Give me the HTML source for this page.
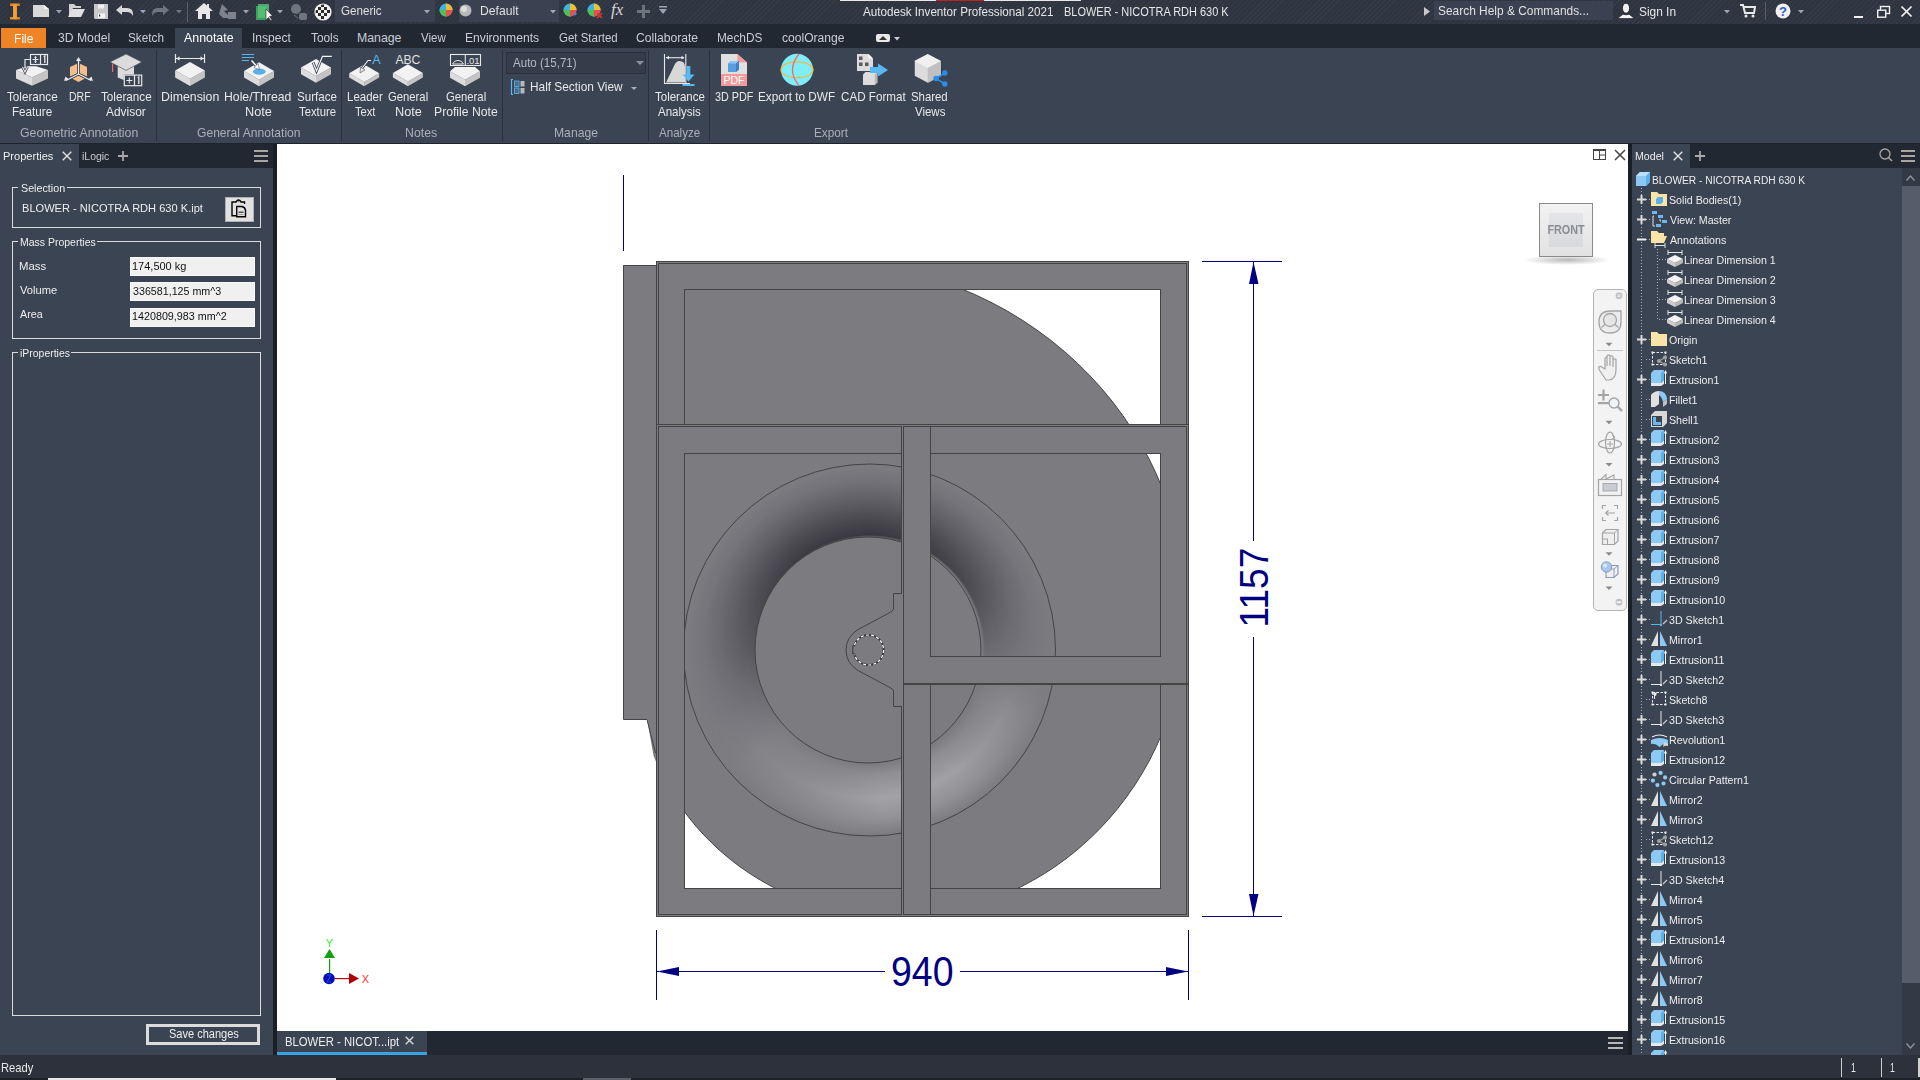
<!DOCTYPE html>
<html><head><meta charset="utf-8">
<style>
html,body{margin:0;padding:0;}
body{width:1920px;height:1080px;overflow:hidden;position:relative;background:#3b4453;font-family:"Liberation Sans", sans-serif;}
.t{position:absolute;white-space:nowrap;line-height:1;}
.r{position:absolute;}
.s{position:absolute;overflow:visible;}
</style></head><body>
<div class="r" style="left:0px;top:0px;width:1920px;height:24px;background:#2f3540;background-image:repeating-linear-gradient(135deg, rgba(255,255,255,0.035) 0 1px, rgba(0,0,0,0) 1px 3.6px);"></div><svg class="s" style="left:8px;top:2px;" width="14" height="20" viewBox="0 0 14 20"><defs><linearGradient id="lg1" x1="0" x2="1"><stop offset="0" stop-color="#e07a1a"/><stop offset="0.5" stop-color="#f4a640"/><stop offset="1" stop-color="#d06a10"/></linearGradient></defs><path d="M2,1.5 H12 V4 H9 V15 H12 V17.5 H2 V15 H5 V4 H2 Z" fill="url(#lg1)"/></svg><svg class="s" style="left:33px;top:4px;" width="17" height="14" viewBox="0 0 17 14"><path d="M0,1 H11 L16,5 V13 H0 Z" fill="#d9d9d9"/><path d="M11,1 V5 H16" fill="#f2f2f2"/></svg><svg class="s" style="left:56px;top:10px;" width="6" height="4" viewBox="0 0 6 4"><path d="M0,0 H6 L3,3.5 Z" fill="#9aa3b5"/></svg><svg class="s" style="left:68px;top:4px;" width="18" height="14" viewBox="0 0 18 14"><path d="M1,0 H6 L8,2 H13 V4 H5 L1,13 Z" fill="#d0d0d0"/><path d="M4,5 H17 L13,13 H0 Z" fill="#e0e0e0"/></svg><svg class="s" style="left:94px;top:4px;" width="14" height="15" viewBox="0 0 14 15"><path d="M0,0 H14 V15 H1 L0,14 Z" fill="#c8c8c8"/><rect x="4" y="0.5" width="6" height="4" fill="#f0f0f0"/><rect x="4" y="9.5" width="7" height="4.5" fill="#f5f5f5"/><rect x="5" y="10.5" width="1.2" height="2" fill="#333"/></svg><svg class="s" style="left:116px;top:5px;" width="18" height="12" viewBox="0 0 18 12"><path d="M0,5 L6,0 V3 H11 Q17,3 17,9 V11 Q15,7 11,7 H6 V10 Z" fill="#d8d8d8"/></svg><svg class="s" style="left:140px;top:10px;" width="6" height="4" viewBox="0 0 6 4"><path d="M0,0 H6 L3,3.5 Z" fill="#9aa3b5"/></svg><svg class="s" style="left:152px;top:5px;" width="18" height="12" viewBox="0 0 18 12"><path d="M17,5 L11,0 V3 H6 Q0,3 0,9 V11 Q2,7 6,7 H11 V10 Z" fill="#6f7580"/></svg><svg class="s" style="left:176px;top:10px;" width="6" height="4" viewBox="0 0 6 4"><path d="M0,0 H6 L3,3.5 Z" fill="#6f7580"/></svg><div class="r" style="left:187px;top:2px;width:1px;height:20px;background:#5a606b;"></div><svg class="s" style="left:195px;top:3px;" width="18" height="17" viewBox="0 0 18 17"><path d="M9,0 L18,8 H15 V16 H11 V11 H7 V16 H3 V8 H0 Z" fill="#e8e8e8"/><rect x="12" y="1" width="2" height="4" fill="#e8e8e8"/></svg><svg class="s" style="left:219px;top:4px;" width="18" height="15" viewBox="0 0 18 15"><path d="M3,0 L9,6 L5,7 L12,14 H4 L0,10 Z" fill="#7d838c"/><rect x="9" y="8" width="8" height="7" fill="#7d838c"/></svg><svg class="s" style="left:243px;top:10px;" width="6" height="4" viewBox="0 0 6 4"><path d="M0,0 H6 L3,3.5 Z" fill="#9aa3b5"/></svg><svg class="s" style="left:255px;top:3px;" width="18" height="18" viewBox="0 0 18 18"><rect x="1" y="3" width="11" height="14" fill="#3aa35a"/><rect x="3" y="1" width="11" height="14" fill="#5cc27a" opacity="0.8"/><path d="M11,6 L11,17 L13.5,14.5 L16,18 L17,17 L14.5,13.5 L17.5,13 Z" fill="#ffffff"/><path d="M11,6 L11,17 L13.5,14.5 L16,18 L17,17 L14.5,13.5 L17.5,13 Z" fill="none" stroke="#222" stroke-width="0.6"/></svg><svg class="s" style="left:277px;top:10px;" width="6" height="4" viewBox="0 0 6 4"><path d="M0,0 H6 L3,3.5 Z" fill="#9aa3b5"/></svg><svg class="s" style="left:290px;top:3px;" width="18" height="18" viewBox="0 0 18 18"><ellipse cx="6" cy="6" rx="5" ry="5" fill="#6f757e"/><rect x="9" y="10" width="8" height="7" rx="2" fill="#6f757e"/><path d="M4,12 L8,15" stroke="#6f757e"/></svg><svg class="s" style="left:314px;top:3px;" width="18" height="18" viewBox="0 0 18 18"><circle cx="9" cy="9" r="8" fill="#f0f0f0"/><g fill="#2a2a2a"><rect x="4" y="4" width="3" height="3"/><rect x="10" y="4" width="3" height="3"/><rect x="7" y="7" width="3" height="3"/><rect x="4" y="10" width="3" height="3"/><rect x="10" y="10" width="3" height="3"/><rect x="7" y="1" width="3" height="3"/><rect x="7" y="13" width="3" height="3"/><rect x="1" y="7" width="3" height="3"/><rect x="13" y="7" width="3" height="3"/></g><circle cx="9" cy="9" r="8" fill="none" stroke="#f0f0f0" stroke-width="1.2"/></svg><div class="r" style="left:335px;top:0px;width:100px;height:22px;background:#3a4150;"></div><div class="t" style="left:341.42px;top:5.22px;font-size:12.5px;color:#e0e0e0;transform:scaleX(0.9285);transform-origin:0 0;">Generic</div><svg class="s" style="left:424px;top:10px;" width="6" height="4" viewBox="0 0 6 4"><path d="M0,0 H6 L3,3.5 Z" fill="#a0a7b3"/></svg><svg class="s" style="left:439px;top:3px;" width="14" height="14" viewBox="0 0 14 14"><circle cx="7" cy="7" r="6.5" fill="#3cb4e6"/><path d="M7,7 L7,0.5 A6.5,6.5 0 0 1 13.5,7 Z" fill="#f0c030"/><path d="M7,7 L13.5,7 A6.5,6.5 0 0 1 7,13.5 Z" fill="#e85050"/><path d="M7,7 L7,13.5 A6.5,6.5 0 0 1 0.5,7 Z" fill="#50c050"/></svg><div class="r" style="left:459px;top:0px;width:100px;height:22px;background:#3a4150;"></div><svg class="s" style="left:459px;top:4px;" width="13" height="13" viewBox="0 0 13 13"><circle cx="6.5" cy="6.5" r="6" fill="#b8b8b8"/><circle cx="5" cy="5" r="3" fill="#dcdcdc"/></svg><div class="t" style="left:479.53px;top:5.22px;font-size:12.5px;color:#e0e0e0;transform:scaleX(0.9724);transform-origin:0 0;">Default</div><svg class="s" style="left:550px;top:10px;" width="6" height="4" viewBox="0 0 6 4"><path d="M0,0 H6 L3,3.5 Z" fill="#a0a7b3"/></svg><svg class="s" style="left:563px;top:3px;" width="16" height="16" viewBox="0 0 16 16"><circle cx="7" cy="7" r="6.5" fill="#3cb4e6"/><path d="M7,7 L7,0.5 A6.5,6.5 0 0 1 13.5,7 Z" fill="#f0c030"/><path d="M7,7 L13.5,7 A6.5,6.5 0 0 1 7,13.5 Z" fill="#e85050"/><path d="M7,7 L7,13.5 A6.5,6.5 0 0 1 0.5,7 Z" fill="#50c050"/><path d="M10,10 h4 l-2,3 z" fill="#3a8ee0"/></svg><svg class="s" style="left:587px;top:3px;" width="16" height="16" viewBox="0 0 16 16"><circle cx="7" cy="7" r="6.5" fill="#3cb4e6"/><path d="M7,7 L7,0.5 A6.5,6.5 0 0 1 13.5,7 Z" fill="#f0c030"/><path d="M7,7 L13.5,7 A6.5,6.5 0 0 1 7,13.5 Z" fill="#e85050"/><path d="M7,7 L7,13.5 A6.5,6.5 0 0 1 0.5,7 Z" fill="#50c050"/><path d="M10,10 L15,15 M15,10 L10,15" stroke="#e83030" stroke-width="1.5"/></svg><div class="t" style="left:611px;top:1px;font-size:17px;font-family:'Liberation Serif',serif;font-style:italic;color:#d8d8d8;">fx</div><svg class="s" style="left:637px;top:5px;" width="13" height="13" viewBox="0 0 13 13"><path d="M5,0 H8 V5 H13 V8 H8 V13 H5 V8 H0 V5 H5 Z" fill="#6f757e"/></svg><svg class="s" style="left:659px;top:6px;" width="8" height="9" viewBox="0 0 8 9"><rect x="0" y="0" width="8" height="1.5" fill="#9aa3b5"/><path d="M0,3 H8 L4,8 Z" fill="#9aa3b5"/></svg><div class="r" style="left:840px;top:0px;width:96px;height:1px;background:#e8e8e8;"></div><div class="r" style="left:936px;top:0px;width:48px;height:1px;background:#c02020;"></div><div class="r" style="left:984px;top:0px;width:97px;height:1px;background:#e8e8e8;"></div><div class="t" style="left:862.50px;top:6.36px;font-size:12.8px;color:#e6e6e6;transform:scaleX(0.9107);transform-origin:0 0;">Autodesk Inventor Professional 2021</div><div class="t" style="left:1064.12px;top:6.36px;font-size:12.8px;color:#e6e6e6;transform:scaleX(0.8577);transform-origin:0 0;">BLOWER - NICOTRA RDH 630 K</div><svg class="s" style="left:1424px;top:7px;" width="6" height="9" viewBox="0 0 6 9"><path d="M0,0 L6,4.5 L0,9 Z" fill="#c8c8c8"/></svg><div class="r" style="left:1434px;top:1px;width:179px;height:19px;background:#3a4251;"></div><div class="t" style="left:1438.46px;top:4.66px;font-size:12.8px;color:#e0e0e0;transform:scaleX(0.9314);transform-origin:0 0;">Search Help &amp; Commands...</div><svg class="s" style="left:1616px;top:2px;" width="20" height="18" viewBox="0 0 20 18"><ellipse cx="10" cy="6.2" rx="3.6" ry="5" fill="#f0f0f0" stroke="#111" stroke-width="0.8"/><path d="M1.5,16.5 L7,12.2 Q10,13.5 13,12.2 L18.5,16.5 Z" fill="#f4f4f4" stroke="#111" stroke-width="0.6"/></svg><div class="t" style="left:1638.71px;top:5.96px;font-size:12.8px;color:#e6e6e6;transform:scaleX(0.9294);transform-origin:0 0;">Sign In</div><svg class="s" style="left:1724px;top:10px;" width="6" height="4" viewBox="0 0 6 4"><path d="M0,0 H6 L3,3.5 Z" fill="#9aa3b5"/></svg><svg class="s" style="left:1740px;top:4px;" width="16" height="14" viewBox="0 0 16 14"><path d="M0,1 H3 L5,9 H14 L15,3 H4" fill="none" stroke="#e8e8e8" stroke-width="2"/><circle cx="6" cy="12" r="1.5" fill="#e8e8e8"/><circle cx="13" cy="12" r="1.5" fill="#e8e8e8"/></svg><div class="r" style="left:1765px;top:2px;width:1px;height:18px;background:#5a606b;"></div><svg class="s" style="left:1775px;top:3px;" width="16" height="16" viewBox="0 0 16 16"><circle cx="8" cy="8" r="7.5" fill="#f0f0f0"/><text x="8" y="13" font-size="13" font-weight="bold" text-anchor="middle" fill="#2a5ad0" font-family="Liberation Sans">?</text></svg><svg class="s" style="left:1798px;top:10px;" width="6" height="4" viewBox="0 0 6 4"><path d="M0,0 H6 L3,3.5 Z" fill="#9aa3b5"/></svg><svg class="s" style="left:1854px;top:16px;" width="9" height="2" viewBox="0 0 9 2"><rect width="9" height="2" fill="#f0f0f0"/></svg><svg class="s" style="left:1877px;top:6px;" width="13" height="12" viewBox="0 0 13 12"><rect x="3.5" y="0.5" width="9" height="7" fill="none" stroke="#f0f0f0" stroke-width="1.4"/><rect x="0.7" y="4.2" width="8" height="7" fill="#2f3540" stroke="#f0f0f0" stroke-width="1.4"/></svg><svg class="s" style="left:1901px;top:6px;" width="11" height="11" viewBox="0 0 11 11"><path d="M0.5,0.5 L10.5,10.5 M10.5,0.5 L0.5,10.5" stroke="#f4f4f4" stroke-width="1.7"/></svg><div class="r" style="left:0px;top:24px;width:1920px;height:24px;background:#222832;"></div><div class="r" style="left:1px;top:28px;width:45px;height:20px;background:#ef8426;"></div><div class="t" style="left:14.03px;top:32.59px;font-size:12.3px;color:#ffffff;transform:scaleX(0.9822);transform-origin:0 0;">File</div><div class="r" style="left:175px;top:28px;width:67px;height:20px;background:#3b4453;"></div><div class="t" style="left:57.57px;top:31.59px;font-size:12.3px;color:#c9ced6;transform:scaleX(0.9908);transform-origin:0 0;">3D Model</div><div class="t" style="left:128.47px;top:31.59px;font-size:12.3px;color:#c9ced6;transform:scaleX(0.9577);transform-origin:0 0;">Sketch</div><div class="t" style="left:184.00px;top:31.59px;font-size:12.3px;color:#ffffff;transform:scaleX(1.0060);transform-origin:0 0;">Annotate</div><div class="t" style="left:251.91px;top:31.59px;font-size:12.3px;color:#c9ced6;transform:scaleX(0.9805);transform-origin:0 0;">Inspect</div><div class="t" style="left:310.76px;top:31.59px;font-size:12.3px;color:#c9ced6;transform:scaleX(0.9628);transform-origin:0 0;">Tools</div><div class="t" style="left:357.02px;top:31.59px;font-size:12.3px;color:#c9ced6;">Manage</div><div class="t" style="left:421.00px;top:31.59px;font-size:12.3px;color:#c9ced6;transform:scaleX(0.9359);transform-origin:0 0;">View</div><div class="t" style="left:465.03px;top:31.59px;font-size:12.3px;color:#c9ced6;transform:scaleX(0.9858);transform-origin:0 0;">Environments</div><div class="t" style="left:558.93px;top:31.59px;font-size:12.3px;color:#c9ced6;transform:scaleX(0.9340);transform-origin:0 0;">Get Started</div><div class="t" style="left:636.39px;top:31.59px;font-size:12.3px;color:#c9ced6;transform:scaleX(0.9869);transform-origin:0 0;">Collaborate</div><div class="t" style="left:717.05px;top:31.59px;font-size:12.3px;color:#c9ced6;transform:scaleX(0.9629);transform-origin:0 0;">MechDS</div><div class="t" style="left:782.02px;top:31.59px;font-size:12.3px;color:#c9ced6;transform:scaleX(0.9823);transform-origin:0 0;">coolOrange</div><svg class="s" style="left:876px;top:34px;" width="14" height="8" viewBox="0 0 14 8"><rect x="0" y="0" width="14" height="8" rx="2" fill="#e8e8e8"/><path d="M3,6 L7,2 L11,6 Z" fill="#333"/></svg><svg class="s" style="left:894px;top:37px;" width="6" height="4" viewBox="0 0 6 4"><path d="M0,0 H6 L3,3.5 Z" fill="#c9ced6"/></svg><div class="r" style="left:0px;top:48px;width:1919px;height:95px;background:#3b4453;"></div><div class="r" style="left:0px;top:143px;width:1920px;height:1px;background:#1f242c;"></div><div class="r" style="left:156px;top:50px;width:1px;height:91px;background:#2b313c;"></div><div class="r" style="left:341px;top:50px;width:1px;height:91px;background:#2b313c;"></div><div class="r" style="left:502px;top:50px;width:1px;height:91px;background:#2b313c;"></div><div class="r" style="left:648px;top:50px;width:1px;height:91px;background:#2b313c;"></div><div class="r" style="left:709px;top:50px;width:1px;height:91px;background:#2b313c;"></div><div class="t" style="left:7.27px;top:90.50px;font-size:12.4px;color:#e8e8e8;transform:scaleX(0.9432);transform-origin:0 0;">Tolerance</div><div class="t" style="left:12.37px;top:106.00px;font-size:12.4px;color:#e8e8e8;transform:scaleX(0.9411);transform-origin:0 0;">Feature</div><div class="t" style="left:68.76px;top:90.50px;font-size:12.4px;color:#e8e8e8;transform:scaleX(0.8480);transform-origin:0 0;">DRF</div><div class="t" style="left:101.02px;top:90.50px;font-size:12.4px;color:#e8e8e8;transform:scaleX(0.9432);transform-origin:0 0;">Tolerance</div><div class="t" style="left:106.25px;top:106.00px;font-size:12.4px;color:#e8e8e8;transform:scaleX(0.9619);transform-origin:0 0;">Advisor</div><div class="t" style="left:161.31px;top:90.50px;font-size:12.4px;color:#e8e8e8;transform:scaleX(0.9955);transform-origin:0 0;">Dimension</div><div class="t" style="left:224.22px;top:90.50px;font-size:12.4px;color:#e8e8e8;transform:scaleX(0.9870);transform-origin:0 0;">Hole/Thread</div><div class="t" style="left:244.78px;top:106.00px;font-size:12.4px;color:#e8e8e8;transform:scaleX(1.0253);transform-origin:0 0;">Note</div><div class="t" style="left:296.78px;top:90.50px;font-size:12.4px;color:#e8e8e8;transform:scaleX(0.9337);transform-origin:0 0;">Surface</div><div class="t" style="left:299.47px;top:106.00px;font-size:12.4px;color:#e8e8e8;transform:scaleX(0.9141);transform-origin:0 0;">Texture</div><div class="t" style="left:346.58px;top:90.50px;font-size:12.4px;color:#e8e8e8;transform:scaleX(0.9266);transform-origin:0 0;">Leader</div><div class="t" style="left:354.78px;top:106.00px;font-size:12.4px;color:#e8e8e8;transform:scaleX(0.9000);transform-origin:0 0;">Text</div><div class="t" style="left:388.19px;top:90.50px;font-size:12.4px;color:#e8e8e8;transform:scaleX(0.9106);transform-origin:0 0;">General</div><div class="t" style="left:394.78px;top:106.00px;font-size:12.4px;color:#e8e8e8;transform:scaleX(1.0253);transform-origin:0 0;">Note</div><div class="t" style="left:446.34px;top:90.50px;font-size:12.4px;color:#e8e8e8;transform:scaleX(0.9106);transform-origin:0 0;">General</div><div class="t" style="left:433.72px;top:106.00px;font-size:12.4px;color:#e8e8e8;transform:scaleX(0.9842);transform-origin:0 0;">Profile Note</div><div class="t" style="left:654.77px;top:90.50px;font-size:12.4px;color:#e8e8e8;transform:scaleX(0.9281);transform-origin:0 0;">Tolerance</div><div class="t" style="left:658.30px;top:106.00px;font-size:12.4px;color:#e8e8e8;transform:scaleX(0.9288);transform-origin:0 0;">Analysis</div><div class="t" style="left:714.92px;top:90.50px;font-size:12.4px;color:#e8e8e8;transform:scaleX(0.8724);transform-origin:0 0;">3D PDF</div><div class="t" style="left:758.26px;top:90.50px;font-size:12.4px;color:#e8e8e8;transform:scaleX(0.9492);transform-origin:0 0;">Export to DWF</div><div class="t" style="left:841.12px;top:90.50px;font-size:12.4px;color:#e8e8e8;transform:scaleX(0.9390);transform-origin:0 0;">CAD Format</div><div class="t" style="left:911.49px;top:90.50px;font-size:12.4px;color:#e8e8e8;transform:scaleX(0.9176);transform-origin:0 0;">Shared</div><div class="t" style="left:915.00px;top:106.00px;font-size:12.4px;color:#e8e8e8;transform:scaleX(0.9252);transform-origin:0 0;">Views</div><div class="t" style="left:19.98px;top:127.40px;font-size:12.4px;color:#aab0ba;transform:scaleX(0.9927);transform-origin:0 0;">Geometric Annotation</div><div class="t" style="left:196.64px;top:127.40px;font-size:12.4px;color:#aab0ba;transform:scaleX(0.9759);transform-origin:0 0;">General Annotation</div><div class="t" style="left:405.26px;top:127.40px;font-size:12.4px;color:#aab0ba;transform:scaleX(0.9939);transform-origin:0 0;">Notes</div><div class="t" style="left:553.53px;top:127.40px;font-size:12.4px;color:#aab0ba;transform:scaleX(0.9807);transform-origin:0 0;">Manage</div><div class="t" style="left:659.25px;top:127.40px;font-size:12.4px;color:#aab0ba;transform:scaleX(0.9349);transform-origin:0 0;">Analyze</div><div class="t" style="left:813.56px;top:127.40px;font-size:12.4px;color:#aab0ba;transform:scaleX(0.9488);transform-origin:0 0;">Export</div><svg class="s" style="left:0px;top:0px;pointer-events:none;" width="1000" height="100" viewBox="0 0 1000 100"><path d="M16,70.0 L32,77.2 V85.7 L16,78.5 Z" fill="#dcdcdc"/><path d="M48,70.0 L32,77.2 V85.7 L48,78.5 Z" fill="#c4c4c4"/><path d="M16,70.0 L27.8,66.3 H36.2 L48,70.0 L32,77.2 Z" fill="#f2f2f2"/><rect x="30.5" y="54.5" width="17" height="10" fill="#3b4453" stroke="#e8e8e8" stroke-width="1.2"/><path d="M40.5,54.5 V64.5" stroke="#e8e8e8" stroke-width="1.2"/><path d="M35.5,56.5 V62.5 M32.5,59.5 H38.5" stroke="#e8e8e8" stroke-width="1.1"/><path d="M34.3,57.7 L35.5,56.3 L36.7,57.7 M34.3,61.3 L35.5,62.7 L36.7,61.3" fill="none" stroke="#e8e8e8" stroke-width="0.8"/><path d="M43.8,57 L44.8,56 V63" fill="none" stroke="#e8e8e8" stroke-width="1.3"/><path d="M30.5,59.5 H25 V71" fill="none" stroke="#e8e8e8" stroke-width="1.2"/><path d="M22.5,67 L25,72 L27.5,67" fill="none" stroke="#3b4453" stroke-width="2.6"/><path d="M22.5,67 L25,72 L27.5,67" fill="none" stroke="#e8e8e8" stroke-width="1.1"/><path d="M70,67 L77,63.8 V73.5 L70,76.5 Z M80,63.8 L87,67 V76.5 L80,73.5 Z M72,78.5 L78.5,75.5 L85,78.5 L78.5,82 Z" fill="#f4be8a"/><path d="M78.5,60 V74 M78.5,74 L66,80.5 M78.5,74 L91,80.5" stroke="#3b4453" stroke-width="2.6"/><path d="M78.5,60 V74 M78.5,74 L66,80.5 M78.5,74 L91,80.5" stroke="#e8e8e8" stroke-width="1.3"/><path d="M76,61 L78.5,57 L81,61 Z M64,81 L65.5,76.5 L69,79.5 Z M93,81 L91.5,76.5 L88,79.5 Z" fill="#e8e8e8"/><path d="M117.7,66 V77.5 L123.8,80 V74.6 H134 V66 Z" fill="#dcdcdc"/><path d="M110,62 L126.1,54 L141.8,62 L126.1,70.4 Z" fill="#dcdcdc" stroke="#3b4453" stroke-width="0.6"/><rect x="112" y="63.5" width="1.2" height="8.5" fill="#f06a6a"/><rect x="124.3" y="75.1" width="17.4" height="10.6" fill="#3b4453" stroke="#e8e8e8" stroke-width="1.2"/><path d="M134.5,75 V86" stroke="#e8e8e8" stroke-width="1.2"/><path d="M129.3,77.5 V83.5 M126.3,80.5 H132.3" stroke="#e8e8e8" stroke-width="1.1"/><path d="M137.8,78 L138.8,77 V84" fill="none" stroke="#e8e8e8" stroke-width="1.3"/><path d="M175.5,54 V63 M204.5,54 V63 M176,58.5 H204" stroke="#e8e8e8" stroke-width="1.2"/><path d="M176.5,58.5 L179.5,56.3 V60.7 Z M203.5,58.5 L200.5,56.3 V60.7 Z" fill="#e8e8e8"/><path d="M175.1,70.4 L190,78.8 V86.0 L175.1,77.60000000000001 Z" fill="#dcdcdc"/><path d="M204.9,70.4 L190,78.8 V86.0 L204.9,77.60000000000001 Z" fill="#c4c4c4"/><path d="M175.1,70.4 L190,62 L204.9,70.4 L190,78.8 Z" fill="#f2f2f2"/><path d="M241.8,54.5 H254 M241.8,57.5 H254 M241.8,60.5 H249" stroke="#5ab8f0" stroke-width="1.2"/><path d="M244,71.0 L259,79.69999999999999 V86.19999999999999 L244,77.5 Z" fill="#dcdcdc"/><path d="M274,71.0 L259,79.69999999999999 V86.19999999999999 L274,77.5 Z" fill="#c4c4c4"/><path d="M244,71.0 L259,62.3 L274,71.0 L259,79.69999999999999 Z" fill="#f2f2f2"/><ellipse cx="259.3" cy="71.6" rx="6.4" ry="3.1" fill="#5aaee6"/><path d="M251.5,60.5 L257,66.5" stroke="#3b4453" stroke-width="3"/><path d="M251.5,60.5 L257,66.5" stroke="#ffffff" stroke-width="1.4"/><path d="M254,67.5 L259.5,69.5 L258,63.5 Z" fill="#ffffff" stroke="#3b4453" stroke-width="0.5"/><path d="M301,67.5 L316,76.0 V82.8 L301,74.3 Z" fill="#dcdcdc"/><path d="M331,67.5 L316,76.0 V82.8 L331,74.3 Z" fill="#c4c4c4"/><path d="M301,67.5 L316,59 L331,67.5 L316,76.0 Z" fill="#f2f2f2"/><path d="M313.2,62.6 L316.5,71 L322.5,56.3 H331.8" fill="none" stroke="#3b4453" stroke-width="2.8"/><path d="M313.2,62.6 L316.5,71 L322.5,56.3 H331.8" fill="none" stroke="#f4f4f4" stroke-width="1.2"/><path d="M349.2,73.3 L364.2,82.0 V86.2 L349.2,77.5 Z" fill="#dcdcdc"/><path d="M379.2,73.3 L364.2,82.0 V86.2 L379.2,77.5 Z" fill="#c4c4c4"/><path d="M349.2,73.3 L364.2,64.6 L379.2,73.3 L364.2,82.0 Z" fill="#f2f2f2"/><path d="M371,60.5 H368 L361.5,69" fill="none" stroke="#3b4453" stroke-width="2.6"/><path d="M371,60.5 H368 L361.5,69" fill="none" stroke="#f0f0f0" stroke-width="1.1"/><path d="M360,73 L360.5,67 L365,70 Z" fill="#e0e0e0" stroke="#555" stroke-width="0.6"/><text x="376.4" y="63.8" font-size="12.6" text-anchor="middle" fill="#5ab8f0" font-family="Liberation Sans">A</text><text x="407.9" y="63.8" font-size="12.6" text-anchor="middle" fill="#e0e0e0" font-family="Liberation Sans" textLength="25" lengthAdjust="spacingAndGlyphs">ABC</text><path d="M392.9,72.9 L407.9,81.6 V86.19999999999999 L392.9,77.5 Z" fill="#dcdcdc"/><path d="M422.9,72.9 L407.9,81.6 V86.19999999999999 L422.9,77.5 Z" fill="#c4c4c4"/><path d="M392.9,72.9 L407.9,64.2 L422.9,72.9 L407.9,81.6 Z" fill="#f2f2f2"/><rect x="450.5" y="54.5" width="30" height="11" fill="none" stroke="#e8e8e8" stroke-width="1.1"/><path d="M465.3,54.5 V65.5" stroke="#e8e8e8" stroke-width="1.1"/><path d="M452.5,64 A6,6 0 0 1 463.5,64 Z" fill="none" stroke="#e8e8e8" stroke-width="1"/><text x="473" y="64" font-size="9.5" text-anchor="middle" fill="#e8e8e8" font-family="Liberation Sans">.01</text><path d="M450,71.3 L465,79.8 V86.3 L450,77.8 Z" fill="#dcdcdc"/><path d="M480,71.3 L465,79.8 V86.3 L480,77.8 Z" fill="#c4c4c4"/><path d="M450,71.3 L455,67 H475 L480,71.3 L465,79.8 Z" fill="#f2f2f2"/><path d="M513,79.5 H511.5 V94.5 H513" fill="none" stroke="#5ab8f0" stroke-width="1.2"/><rect x="514.5" y="81" width="4.5" height="5.5" fill="#4a6a88" stroke="#5ab8f0" stroke-width="0.8"/><rect x="514.5" y="88" width="4.5" height="5.5" fill="#4a6a88" stroke="#5ab8f0" stroke-width="0.8"/><rect x="520.5" y="81" width="4" height="5.5" fill="#b8b8b8"/><rect x="520.5" y="88" width="4" height="5.5" fill="#b8b8b8"/><path d="M664.5,54 V83.5 H690 M685.8,54 V83" fill="none" stroke="#e8e8e8" stroke-width="1.1"/><path d="M666,57.7 H684" stroke="#e8e8e8" stroke-width="1.1"/><path d="M666,57.7 L669,55.8 V59.6 Z M684.5,57.7 L681.5,55.8 V59.6 Z" fill="#e8e8e8"/><path d="M666,82.5 L674,66 Q676,61 679.5,61 Q685,61 685,67 V82.5 Z" fill="#d8d8d8"/><rect x="686.5" y="66" width="3.8" height="9" fill="#5ab8f0"/><path d="M682.5,74.5 H694.5 L688.5,81.5 Z" fill="#5ab8f0"/><rect x="682.5" y="84" width="12" height="2" fill="#5ab8f0"/><path d="M721,54 H737.4 L747,62.4 V85.8 H721 Z" fill="#e0e0e0"/><path d="M737.4,54 L747,62.4 H737.4 Z" fill="#f59a9a"/><rect x="721" y="74" width="26" height="11.8" fill="#f59a9a"/><text x="734" y="84.3" font-size="10.5" text-anchor="middle" fill="#ffffff" font-family="Liberation Sans">PDF</text><path d="M728,63.5 L731,61 H739 V69.5 L736,72 H728 Z" fill="#5a9ee0"/><path d="M728,63.5 L731,61 H739 L736,63.5 Z" fill="#8cc4f4"/><path d="M736,63.5 L739,61 V69.5 L736,72 Z" fill="#3d80c8"/><circle cx="797" cy="69.8" r="16" fill="#80eef8"/><ellipse cx="797" cy="69.8" rx="16" ry="8" fill="none" stroke="#f0b850" stroke-width="1.3"/><path d="M799,54 Q786,70 799,85.6" fill="none" stroke="#f06a6a" stroke-width="1.3"/><path d="M857,54 H868.5 L873,58.5 V71 H857 Z" fill="#dcdcdc"/><path d="M868.5,54 L873,58.5 H868.5 Z" fill="#ffffff"/><rect x="859" y="56.5" width="3.5" height="3.5" fill="#5a5a5a"/><rect x="859" y="62.5" width="3.5" height="3.5" fill="#5a5a5a"/><rect x="865" y="62.5" width="3.5" height="3.5" fill="#5a5a5a"/><path d="M863,74.5 L865.5,72 H877.3 V82.5 L874.8,85 H863 Z" fill="#dcdcdc"/><path d="M874.8,74.5 L877.3,72 V82.5 L874.8,85 Z" fill="#b8b8b8"/><path d="M870,67 H878 V63.5 L888,70 L878,76.5 V73 H870 Z" fill="#5ab8f0"/><path d="M914.4,61 L927.7,54 L941,61 V76 L927.7,83 L914.4,76 Z" fill="#dcdcdc" stroke="#2e3540" stroke-width="0.6"/><path d="M914.4,61 L927.7,54 L941,61 L927.7,68 Z" fill="#f0f0f0"/><path d="M927.7,68 L941,61 V76 L927.7,83 Z" fill="#c0c0c0"/><circle cx="944.8" cy="73" r="2.7" fill="#2a8ee8"/><circle cx="936" cy="78.5" r="2.7" fill="#2a8ee8"/><circle cx="944.8" cy="84" r="2.7" fill="#2a8ee8"/><path d="M944.8,73 L936,78.5 L944.8,84" fill="none" stroke="#2a8ee8" stroke-width="1.5"/></svg><div class="r" style="left:506px;top:52px;width:140px;height:22px;background:#353d4b;box-sizing:border-box;border:1px solid #2b313c;"></div><div class="t" style="left:513.25px;top:57.00px;font-size:12.4px;color:#b5bac3;transform:scaleX(0.9331);transform-origin:0 0;">Auto (15,71)</div><svg class="s" style="left:636px;top:61px;" width="8" height="4" viewBox="0 0 8 4"><path d="M0,0 H8 L4,4 Z" fill="#8a93a3"/></svg><div class="t" style="left:530.30px;top:81.00px;font-size:12.4px;color:#e8e8e8;transform:scaleX(0.9560);transform-origin:0 0;">Half Section View</div><svg class="s" style="left:631px;top:87px;" width="6" height="3" viewBox="0 0 6 3"><path d="M0,0 H6 L3,3 Z" fill="#a9b0bc"/></svg><div class="r" style="left:0px;top:1055px;width:1920px;height:23px;background:#2c313b;"></div><div class="t" style="left:0.60px;top:1061.50px;font-size:12.4px;color:#e8e8e8;transform:scaleX(0.9040);transform-origin:0 0;">Ready</div><div class="r" style="left:1841px;top:1058px;width:1px;height:19px;background:#d0d0d0;"></div><div class="r" style="left:1881px;top:1058px;width:1px;height:19px;background:#d0d0d0;"></div><div class="r" style="left:1918px;top:1058px;width:2px;height:19px;background:#d0d0d0;"></div><div class="t" style="left:1851.34px;top:1061.84px;font-size:12px;color:#e8e8e8;transform:scaleX(0.7280);transform-origin:0 0;">1</div><div class="t" style="left:1890.34px;top:1061.84px;font-size:12px;color:#e8e8e8;transform:scaleX(0.7280);transform-origin:0 0;">1</div><div class="r" style="left:0px;top:1078px;width:1920px;height:2px;background:#1d2027;"></div><div class="r" style="left:48px;top:1078px;width:288px;height:2px;background:#e8e8e8;"></div><div class="r" style="left:583px;top:1078px;width:48px;height:2px;background:#5c6068;"></div><div class="r" style="left:277px;top:144px;width:1351px;height:887px;background:#ffffff;"></div><svg class="s" style="left:0px;top:0px;pointer-events:none;" width="1920" height="1080" viewBox="0 0 1920 1080"><defs><clipPath id="win"><path d="M684,289 H1161 V425 H684 Z M684,453 H902 V889 H684 Z M930,453 H1161 V657 H930 Z M930,685 H1161 V889 H930 Z"/></clipPath></defs><path d="M623,265 V719 H647 L653.6,756.0 L658.1,766.7 L663.2,777.1 L668.7,787.4 L674.8,797.5 L681.3,807.3 L688.3,816.8 L695.8,826.0 L703.8,834.9 L712.2,843.4 L721.0,851.6 L730.2,859.3 L739.9,866.7 L749.9,873.6 L760.3,880.1 L771.0,886.1 L782.1,891.6 L793.4,896.6 L805.1,901.1 L816.9,905.0 L829.1,908.4 L841.4,911.3 L853.9,913.5 L866.6,915.2 L879.4,916.3 L892.3,916.7 L905.3,916.6 L918.3,915.8 L931.3,914.4 L944.3,912.4 L957.3,909.7 L970.2,906.4 L983.0,902.5 L995.7,898.0 L1008.2,892.8 L1020.5,887.0 L1032.6,880.6 L1044.5,873.6 L1056.0,866.0 L1067.3,857.8 L1078.2,849.0 L1088.7,839.6 L1098.9,829.7 L1108.6,819.3 L1117.8,808.4 L1126.6,796.9 L1134.9,785.0 L1142.6,772.6 L1149.8,759.8 L1156.3,746.6 L1162.3,733.0 L1167.7,719.1 L1172.4,704.8 L1176.5,690.2 L1179.8,675.4 L1182.5,660.3 L1184.4,645.1 L1185.7,629.6 L1186.2,614.0 L1185.9,598.3 L1184.9,582.6 L1183.1,566.8 L1180.5,551.0 L1177.2,535.3 L1173.1,519.6 L1168.2,504.1 L1162.5,488.7 L1156.1,473.5 L1148.9,458.6 L1140.9,443.9 L1132.2,429.5 L1122.8,415.5 L1112.6,401.8 L1101.7,388.6 L1090.0,375.8 L1077.8,363.6 L1064.8,351.8 L1051.2,340.6 L1037.0,330.1 L1022.2,320.1 L1006.9,310.8 L991.0,302.3 L974.6,294.4 L957.8,287.3 L940.5,281.0 L922.8,275.4 L904.7,270.8 L886.4,266.9 L867.7,263.9 L848.8,261.9 L656,265 Z" fill="#7c7b80"/><path d="M656,265.5 H623.5 V719.5 H647 L655.5,753" fill="none" stroke="#444444" stroke-width="1"/><g clip-path="url(#win)"><path d="M653.6,756.0 L658.1,766.7 L663.2,777.1 L668.7,787.4 L674.8,797.5 L681.3,807.3 L688.3,816.8 L695.8,826.0 L703.8,834.9 L712.2,843.4 L721.0,851.6 L730.2,859.3 L739.9,866.7 L749.9,873.6 L760.3,880.1 L771.0,886.1 L782.1,891.6 L793.4,896.6 L805.1,901.1 L816.9,905.0 L829.1,908.4 L841.4,911.3 L853.9,913.5 L866.6,915.2 L879.4,916.3 L892.3,916.7 L905.3,916.6 L918.3,915.8 L931.3,914.4 L944.3,912.4 L957.3,909.7 L970.2,906.4 L983.0,902.5 L995.7,898.0 L1008.2,892.8 L1020.5,887.0 L1032.6,880.6 L1044.5,873.6 L1056.0,866.0 L1067.3,857.8 L1078.2,849.0 L1088.7,839.6 L1098.9,829.7 L1108.6,819.3 L1117.8,808.4 L1126.6,796.9 L1134.9,785.0 L1142.6,772.6 L1149.8,759.8 L1156.3,746.6 L1162.3,733.0 L1167.7,719.1 L1172.4,704.8 L1176.5,690.2 L1179.8,675.4 L1182.5,660.3 L1184.4,645.1 L1185.7,629.6 L1186.2,614.0 L1185.9,598.3 L1184.9,582.6 L1183.1,566.8 L1180.5,551.0 L1177.2,535.3 L1173.1,519.6 L1168.2,504.1 L1162.5,488.7 L1156.1,473.5 L1148.9,458.6 L1140.9,443.9 L1132.2,429.5 L1122.8,415.5 L1112.6,401.8 L1101.7,388.6 L1090.0,375.8 L1077.8,363.6 L1064.8,351.8 L1051.2,340.6 L1037.0,330.1 L1022.2,320.1 L1006.9,310.8 L991.0,302.3 L974.6,294.4 L957.8,287.3 L940.5,281.0 L922.8,275.4 L904.7,270.8 L886.4,266.9 L867.7,263.9 L848.8,261.9" fill="none" stroke="#444444" stroke-width="1"/></g></svg><div class="r" style="left:683.5px;top:464px;width:372px;height:372px;border-radius:50%;background:conic-gradient(from 0deg, rgba(12,12,20,0.6) 0deg, rgba(12,12,20,0.56) 30deg, rgba(12,12,20,0.43) 60deg, rgba(12,12,20,0.2) 85deg, rgba(12,12,20,0.05) 100deg, rgba(12,12,20,0) 112deg, rgba(12,12,20,0) 228deg, rgba(12,12,20,0.15) 250deg, rgba(12,12,20,0.33) 270deg, rgba(12,12,20,0.47) 295deg, rgba(12,12,20,0.58) 325deg, rgba(12,12,20,0.6) 360deg);-webkit-mask-image:radial-gradient(circle at 50% 50%, transparent 112px, #000 115px, rgba(0,0,0,0.78) 129px, rgba(0,0,0,0.4) 151px, rgba(0,0,0,0.12) 169px, transparent 183px);"></div><div class="r" style="left:683.5px;top:464px;width:372px;height:372px;border-radius:50%;background:conic-gradient(from 0deg, rgba(255,255,255,0) 0deg, rgba(255,255,255,0) 95deg, rgba(255,255,255,0.14) 115deg, rgba(255,255,255,0.28) 145deg, rgba(255,255,255,0.3) 175deg, rgba(255,255,255,0.15) 205deg, rgba(255,255,255,0.04) 235deg, rgba(255,255,255,0) 250deg, rgba(255,255,255,0) 360deg);-webkit-mask-image:radial-gradient(circle at 50% 50%, transparent 113px, rgba(0,0,0,0.5) 125px, #000 148px, rgba(0,0,0,0.6) 168px, transparent 186px);"></div><svg class="s" style="left:0px;top:0px;pointer-events:none;" width="1920" height="1080" viewBox="0 0 1920 1080"><circle cx="869.5" cy="650" r="186" fill="none" stroke="#444444" stroke-width="1"/><circle cx="868" cy="650" r="113" fill="#7c7b80" stroke="#444444" stroke-width="1"/><path d="M902,593.5 H893.5 V609 Q893,611 890,612.5 L858,629.5 Q846,637 846,650 Q846,663 858,670.5 L890,687.5 Q893,689 893.5,691 V706.5 H902" fill="none" stroke="#444444" stroke-width="1"/><circle cx="868.6" cy="650" r="15" fill="none" stroke="#3a3a3a" stroke-width="2"/><circle cx="868.6" cy="650" r="15" fill="none" stroke="#ffffff" stroke-width="1.2" stroke-dasharray="3 2.2"/><rect x="851" y="645.5" width="4" height="9" fill="#7c7b80"/><path d="M855,645.8 H852.8 V653.8 H855" fill="none" stroke="#3a3a3a" stroke-width="1"/><path d="M656,261 H1189 V917 H656 Z M684,289 H1161 V425 H684 Z M684,453 H902 V889 H684 Z M930,453 H1161 V657 H930 Z M930,685 H1161 V889 H930 Z" fill="#7c7b80" fill-rule="evenodd"/><g shape-rendering="crispEdges"><rect x="656" y="261" width="533" height="1" fill="#444444"/><rect x="656" y="916" width="533" height="1" fill="#444444"/><rect x="656" y="261" width="1" height="656" fill="#444444"/><rect x="1188" y="261" width="1" height="656" fill="#444444"/><rect x="658" y="263" width="529" height="1" fill="#444444"/><rect x="656" y="424" width="533" height="1" fill="#444444"/><rect x="658" y="263" width="1" height="162" fill="#444444"/><rect x="1186" y="263" width="1" height="162" fill="#444444"/><rect x="684" y="289" width="477" height="1" fill="#444444"/><rect x="684" y="289" width="1" height="136" fill="#444444"/><rect x="1160" y="289" width="1" height="136" fill="#444444"/><rect x="658" y="426" width="244" height="1" fill="#444444"/><rect x="903" y="426" width="284" height="1" fill="#444444"/><rect x="658" y="426" width="1" height="489" fill="#444444"/><rect x="1186" y="426" width="1" height="489" fill="#444444"/><rect x="658" y="914" width="244" height="1" fill="#444444"/><rect x="903" y="914" width="284" height="1" fill="#444444"/><rect x="901" y="426" width="1" height="168" fill="#444444"/><rect x="901" y="706" width="1" height="209" fill="#444444"/><rect x="903" y="426" width="1" height="489" fill="#444444"/><rect x="930" y="426" width="1" height="231" fill="#444444"/><rect x="930" y="684" width="1" height="231" fill="#444444"/><rect x="684" y="453" width="218" height="1" fill="#444444"/><rect x="684" y="888" width="218" height="1" fill="#444444"/><rect x="684" y="453" width="1" height="436" fill="#444444"/><rect x="930" y="453" width="231" height="1" fill="#444444"/><rect x="1160" y="453" width="1" height="204" fill="#444444"/><rect x="930" y="656" width="231" height="1" fill="#444444"/><rect x="903" y="683" width="285" height="2" fill="#444444"/><rect x="1160" y="684" width="1" height="205" fill="#444444"/><rect x="930" y="888" width="231" height="1" fill="#444444"/></g></svg><svg class="s" style="left:0px;top:0px;pointer-events:none;" width="1920" height="1080" viewBox="0 0 1920 1080"><rect x="1202" y="261" width="80" height="1" fill="#000080"/><rect x="1202" y="916" width="80" height="1" fill="#000080"/><rect x="1253" y="262" width="1" height="279" fill="#000080"/><rect x="1253" y="637" width="1" height="279" fill="#000080"/><path d="M1253.5,262 L1249,284 H1258.5 Z" fill="#000080"/><path d="M1253.5,916 L1249,894 H1258.5 Z" fill="#000080"/><rect x="656" y="930" width="1" height="70" fill="#000080"/><rect x="1188" y="930" width="1" height="70" fill="#000080"/><rect x="657" y="971" width="228" height="1" fill="#000080"/><rect x="960" y="971" width="228" height="1" fill="#000080"/><path d="M657,971.5 L679,967 V976 Z" fill="#000080"/><path d="M1188,971.5 L1166,967 V976 Z" fill="#000080"/><rect x="623" y="175" width="1" height="76" fill="#000080"/></svg><svg class="s" style="left:0px;top:0px;pointer-events:none;" width="1920" height="1080" viewBox="0 0 1920 1080"><text x="891" y="986" font-size="42" fill="#000080" font-family="Liberation Sans" textLength="62.5" lengthAdjust="spacingAndGlyphs">940</text><text x="0" y="0" transform="translate(1267.6,627.5) rotate(-90)" font-size="40" fill="#000080" font-family="Liberation Sans" textLength="80" lengthAdjust="spacingAndGlyphs">1157</text></svg><div class="r" style="left:1523px;top:255px;width:88px;height:10px;border-radius:50%;background:radial-gradient(ellipse at center, rgba(0,0,0,0.28) 0%, rgba(0,0,0,0) 70%);"></div><div class="r" style="left:1539px;top:203px;width:54px;height:54px;box-sizing:border-box;border:1px solid #8a8a8a;background:linear-gradient(#f2f2f2,#e2e2e2);"></div><div class="r" style="left:1549px;top:213px;width:34px;height:34px;background:linear-gradient(#e4e5e8,#d8d9dc);"></div><div class="t" style="left:1539px;top:224px;width:54px;text-align:center;font-size:12px;font-weight:bold;color:#8a8d92;letter-spacing:0px;transform:scaleX(0.9);">FRONT</div><svg class="s" style="left:1593px;top:149px;" width="14" height="12" viewBox="0 0 14 12"><rect x="0.5" y="0.5" width="12" height="10" fill="none" stroke="#444" stroke-width="1"/><rect x="0.5" y="0.5" width="12" height="1.5" fill="#444"/><path d="M6.5,1 V11 M6.5,6 H12.5" stroke="#444" stroke-width="1"/></svg><svg class="s" style="left:1614px;top:149px;" width="12" height="12" viewBox="0 0 12 12"><path d="M1,1 L11,11 M11,1 L1,11" stroke="#444" stroke-width="1.5"/></svg><div class="r" style="left:1593px;top:289px;width:34px;height:322px;box-sizing:border-box;border:1px solid #b4b4b4;border-radius:5px;background:#f3f3f3;"></div><svg class="s" style="left:1593px;top:289px;" width="34" height="322" viewBox="0 0 34 322"><circle cx="26" cy="6.7" r="3.4" fill="#c4c4c4"/><path d="M24.6,5.3 L27.4,8.1 M27.4,5.3 L24.6,8.1" stroke="#f3f3f3" stroke-width="1"/><path d="M6,33 Q6,22 17,22 H28 V33 Q28,44 17,44 Q6,44 6,33 Z" fill="#ececec" stroke="#a4a4a4" stroke-width="1.3"/><circle cx="17" cy="31" r="6.5" fill="#e6e6e6" stroke="#a4a4a4" stroke-width="1.3"/><path d="M8.5,38.5 L12,35.5 M25.5,38.5 L22,35.5" stroke="#a4a4a4" stroke-width="1.2"/><path d="M12.5,53.7 H19.5 L16,57.2 Z" fill="#8a8a8a"/><rect x="4" y="61" width="26" height="1" fill="#c4c4c4"/><path d="M7,82 Q4,77 8,77.5 L12,80 V70 Q12,68 14,68.5 V77 V67 Q15,65 17,66.5 V77 V67.5 Q18,66 20,67.5 V78 V71 Q21,69 23,70.5 V81 Q23,90 16,91 H13 Z" fill="#efefef" stroke="#a4a4a4" stroke-width="1.2"/><path d="M5,106 H16 M10.5,100.5 V111.5" stroke="#a4a4a4" stroke-width="2.2"/><rect x="5" y="113" width="12" height="2.2" fill="#a4a4a4"/><circle cx="21" cy="114" r="5" fill="#eef3f6" stroke="#a4a4a4" stroke-width="1.4"/><path d="M24.5,117.5 L29,122" stroke="#a4a4a4" stroke-width="2.4"/><path d="M12.5,131.8 H19.5 L16,135.3 Z" fill="#8a8a8a"/><ellipse cx="17" cy="155" rx="11.5" ry="4.5" fill="none" stroke="#a4a4a4" stroke-width="1.2"/><ellipse cx="17" cy="153.5" rx="4.5" ry="10.5" fill="none" stroke="#a4a4a4" stroke-width="1.2"/><path d="M14,155 H20 M17,152 V158" stroke="#a4a4a4" stroke-width="1.1"/><path d="M19,146 L22,148 L19,150" fill="none" stroke="#a4a4a4" stroke-width="1"/><path d="M12.5,174.0 H19.5 L16,177.5 Z" fill="#8a8a8a"/><path d="M5,193 L13,185.5 V190 L21,186 V190" fill="none" stroke="#a4a4a4" stroke-width="1.1"/><rect x="5.5" y="190.5" width="23" height="16" fill="#f2f2f2" stroke="#a4a4a4" stroke-width="1.2"/><rect x="10" y="194.5" width="14" height="7.5" fill="#c9ccd2" stroke="#a4a4a4" stroke-width="0.9"/><path d="M9.5,220 V216.5 H13 M21,216.5 H24.5 V220 M9.5,228 V231.5 H13 M21,231.5 H24.5 V228" fill="none" stroke="#a4a4a4" stroke-width="1.2"/><path d="M12.5,224 H22 M12.5,224 L15.5,221.5 M12.5,224 L15.5,226.5" stroke="#a4a4a4" stroke-width="1.2"/><path d="M9.5,244 L13,240.5 H25 V252 L21.5,255.5 H9.5 Z" fill="#efefef" stroke="#a4a4a4" stroke-width="1.2"/><path d="M9.5,244 H21.5 V255.5 M21.5,244 L25,240.5" fill="none" stroke="#a4a4a4" stroke-width="1"/><rect x="9.5" y="250" width="5" height="5.5" fill="none" stroke="#a4a4a4" stroke-width="1"/><path d="M12.5,263.3 H19.5 L16,266.8 Z" fill="#8a8a8a"/><path d="M13,280 L17,276.5 H25 V285 L21,288.5 H13 Z" fill="#efefef" stroke="#8898b0" stroke-width="1.1"/><path d="M13,280 H21 V288.5 M21,280 L25,276.5" fill="none" stroke="#8898b0" stroke-width="0.9"/><circle cx="13.5" cy="278" r="5.2" fill="#a9c7ec" stroke="#7a98c4" stroke-width="0.9"/><circle cx="12" cy="276.5" r="2" fill="#dbe8f8"/><path d="M12.5,297.5 H19.5 L16,301 Z" fill="#8a8a8a"/><circle cx="26" cy="313.2" r="3.4" fill="#c0c0c0"/><rect x="23.6" y="312.3" width="4.8" height="1.8" fill="#f3f3f3"/></svg><svg class="s" style="left:0px;top:0px;pointer-events:none;" width="1920" height="1080" viewBox="0 0 1920 1080"><rect x="329" y="959" width="1.2" height="14" fill="#10a010"/><path d="M329.5,949 L324,958 H335 Z" fill="#10a010"/><text x="329.5" y="947" font-size="11" text-anchor="middle" fill="#30f030" font-family="Liberation Sans">Y</text><rect x="335" y="978" width="14" height="1.2" fill="#c00000"/><path d="M359,978.5 L349,973 V984 Z" fill="#b00000"/><text x="365.5" y="983" font-size="11" text-anchor="middle" fill="#ff3030" font-family="Liberation Sans">X</text><circle cx="329" cy="978.5" r="5.8" fill="#0010b0"/><path d="M327,975 H331 L327,982 H331" stroke="#2040ff" stroke-width="1" fill="none"/></svg><div class="r" style="left:0px;top:144px;width:273px;height:911px;background:#3b4453;"></div><div class="r" style="left:79px;top:144px;width:194px;height:24px;background:#222832;"></div><div class="t" style="left:2.62px;top:151.27px;font-size:11.5px;color:#eeeeee;transform:scaleX(0.9605);transform-origin:0 0;">Properties</div><svg class="s" style="left:62px;top:151px;" width="10" height="10" viewBox="0 0 10 10"><path d="M0.7,0.7 L9.3,9.3 M9.3,0.7 L0.7,9.3" stroke="#e0e0e0" stroke-width="1.4"/></svg><div class="t" style="left:81.92px;top:151.27px;font-size:11.5px;color:#c8ccd2;transform:scaleX(0.9092);transform-origin:0 0;">iLogic</div><svg class="s" style="left:118px;top:151px;" width="10" height="10" viewBox="0 0 10 10"><path d="M5,0 V10 M0,5 H10" stroke="#a8a8a8" stroke-width="1.8"/></svg><svg class="s" style="left:254px;top:149px;" width="14" height="13" viewBox="0 0 14 13"><rect x="0" y="1" width="14" height="2" fill="#a9a6a2"/><rect x="0" y="6" width="14" height="2" fill="#a9a6a2"/><rect x="0" y="11" width="14" height="2" fill="#a9a6a2"/></svg><div class="r" style="left:273px;top:144px;width:4px;height:911px;background:#1b1f26;"></div><div class="r" style="left:12px;top:187px;width:249px;height:41px;box-sizing:border-box;border:1px solid #dcdcdc;"></div><div class="r" style="left:18px;top:185px;width:49px;height:5px;background:#3b4453;"></div><div class="t" style="left:20.52px;top:183.07px;font-size:11.5px;color:#eeeeee;transform:scaleX(0.9325);transform-origin:0 0;">Selection</div><div class="t" style="left:22.41px;top:203.07px;font-size:11.5px;color:#eeeeee;transform:scaleX(0.9629);transform-origin:0 0;">BLOWER - NICOTRA RDH 630 K.ipt</div><div class="r" style="left:225px;top:197px;width:29px;height:25px;box-sizing:border-box;border:1px solid #b0b0b0;background:#e1e1e1;"></div><svg class="s" style="left:225px;top:197px;" width="29" height="25" viewBox="0 0 29 25"><path d="M11,18.8 H7 V5 H11 Q12,3 13.5,3 Q15,3 16,5 H19.5 V7" fill="none" stroke="#000" stroke-width="1.4"/><rect x="12.7" y="4" width="1.4" height="1.2" fill="#888"/><path d="M11.7,9.5 H16.8 Q19.8,10 20.5,13 V19.8 H11.7 Z" fill="#e1e1e1" stroke="#000" stroke-width="1.4"/><rect x="13.5" y="14.5" width="5" height="1.5" fill="#555"/><rect x="13.5" y="17" width="5" height="1" fill="#999"/></svg><div class="r" style="left:12px;top:241px;width:249px;height:98px;box-sizing:border-box;border:1px solid #dcdcdc;"></div><div class="r" style="left:18px;top:239px;width:79px;height:5px;background:#3b4453;"></div><div class="t" style="left:20.26px;top:237.47px;font-size:11.5px;color:#eeeeee;transform:scaleX(0.9111);transform-origin:0 0;">Mass Properties</div><div class="t" style="left:19.49px;top:261.27px;font-size:11.5px;color:#eeeeee;transform:scaleX(0.9861);transform-origin:0 0;">Mass</div><div class="r" style="left:130px;top:256.7px;width:125px;height:19px;box-sizing:border-box;border:1px solid #f8f8f8;background:#f0f0f0;"></div><div class="t" style="left:132.48px;top:261.27px;font-size:11.5px;color:#111111;transform:scaleX(0.9553);transform-origin:0 0;">174,500 kg</div><div class="t" style="left:20.40px;top:285.07px;font-size:11.5px;color:#eeeeee;transform:scaleX(0.9685);transform-origin:0 0;">Volume</div><div class="r" style="left:130px;top:282px;width:125px;height:19px;box-sizing:border-box;border:1px solid #f8f8f8;background:#f0f0f0;"></div><div class="t" style="left:132.93px;top:285.67px;font-size:11.5px;color:#111111;transform:scaleX(0.9297);transform-origin:0 0;">336581,125 mm^3</div><div class="t" style="left:20.40px;top:309.07px;font-size:11.5px;color:#eeeeee;transform:scaleX(0.9333);transform-origin:0 0;">Area</div><div class="r" style="left:130px;top:307.8px;width:125px;height:19px;box-sizing:border-box;border:1px solid #f8f8f8;background:#f0f0f0;"></div><div class="t" style="left:132.49px;top:311.27px;font-size:11.5px;color:#111111;transform:scaleX(0.9346);transform-origin:0 0;">1420809,983 mm^2</div><div class="r" style="left:12px;top:352px;width:249px;height:664px;box-sizing:border-box;border:1px solid #dcdcdc;"></div><div class="r" style="left:18px;top:350px;width:53px;height:5px;background:#3b4453;"></div><div class="t" style="left:19.72px;top:347.97px;font-size:11.5px;color:#eeeeee;transform:scaleX(0.9086);transform-origin:0 0;">iProperties</div><div class="r" style="left:146px;top:1024px;width:114px;height:21px;box-sizing:border-box;border:3px solid #dcdcdc;background:#3b4453;"></div><div class="t" style="left:168.75px;top:1028.39px;font-size:12.3px;color:#eeeeee;transform:scaleX(0.8961);transform-origin:0 0;">Save changes</div><div class="r" style="left:277px;top:1031px;width:1351px;height:24px;background:#222832;"></div><div class="r" style="left:277px;top:1031px;width:150px;height:24px;background:#3b4453;"></div><div class="r" style="left:277px;top:1052px;width:150px;height:3px;background:#38a3e3;"></div><div class="t" style="left:284.60px;top:1035.59px;font-size:12.3px;color:#eeeeee;transform:scaleX(0.9180);transform-origin:0 0;">BLOWER - NICOT...ipt</div><svg class="s" style="left:405px;top:1036px;" width="9" height="9" viewBox="0 0 9 9"><path d="M0.7,0.7 L8.3,8.3 M8.3,0.7 L0.7,8.3" stroke="#d8d8d8" stroke-width="1.4"/></svg><svg class="s" style="left:1608px;top:1037px;" width="15" height="12" viewBox="0 0 15 12"><rect x="0" y="0" width="15" height="2" fill="#b8b8b8"/><rect x="0" y="5" width="15" height="2" fill="#b8b8b8"/><rect x="0" y="10" width="15" height="2" fill="#b8b8b8"/></svg><div class="r" style="left:1628px;top:144px;width:4px;height:911px;background:#1b1f26;"></div><div class="r" style="left:1632px;top:144px;width:288px;height:911px;background:#3b4453;"></div><div class="r" style="left:1690px;top:144px;width:230px;height:24px;background:#222832;"></div><div class="t" style="left:1634.95px;top:151.07px;font-size:11.5px;color:#eeeeee;transform:scaleX(0.9235);transform-origin:0 0;">Model</div><svg class="s" style="left:1673px;top:151px;" width="10" height="10" viewBox="0 0 10 10"><path d="M0.7,0.7 L9.3,9.3 M9.3,0.7 L0.7,9.3" stroke="#e0e0e0" stroke-width="1.4"/></svg><svg class="s" style="left:1695px;top:151px;" width="10" height="10" viewBox="0 0 10 10"><path d="M5,0 V10 M0,5 H10" stroke="#a8a8a8" stroke-width="1.8"/></svg><svg class="s" style="left:1879px;top:148px;" width="14" height="15" viewBox="0 0 14 15"><circle cx="6" cy="6" r="5" fill="none" stroke="#a9a6a2" stroke-width="1.3"/><path d="M9.5,9.5 L13,13" stroke="#a9a6a2" stroke-width="1.5"/></svg><svg class="s" style="left:1901px;top:149px;" width="14" height="13" viewBox="0 0 14 13"><rect x="0" y="1" width="14" height="2" fill="#a9a6a2"/><rect x="0" y="6" width="14" height="2" fill="#a9a6a2"/><rect x="0" y="11" width="14" height="2" fill="#a9a6a2"/></svg><div class="r" style="left:1902px;top:168px;width:18px;height:887px;background:#333a46;"></div><div class="r" style="left:1902px;top:186px;width:18px;height:797px;background:#555d6b;"></div><svg class="s" style="left:1906px;top:175px;" width="9" height="6" viewBox="0 0 9 6"><path d="M0.5,5.5 L4.5,1 L8.5,5.5" fill="none" stroke="#8f98a8" stroke-width="1.2"/></svg><svg class="s" style="left:1906px;top:1043px;" width="9" height="6" viewBox="0 0 9 6"><path d="M0.5,0.5 L4.5,5 L8.5,0.5" fill="none" stroke="#8f98a8" stroke-width="1.2"/></svg><svg class="s" style="left:0px;top:0px;pointer-events:none;clip-path:inset(168px 18px 25px 1632px);" width="1920" height="1080" viewBox="0 0 1920 1080"><g><path d="M1636,176 L1640,172 H1650 V182 L1646,186 H1636 Z" fill="#8ccaf4"/><path d="M1636,176 L1640,172 H1650 L1646,176 Z" fill="#b8e0fa"/><path d="M1646,176 L1650,172 V182 L1646,186 Z" fill="#5ab0e8"/><path d="M1641.5,188 V1055" stroke="#a8b0bc" stroke-width="1" stroke-dasharray="1 2"/><path d="M1657.5,249 V320" stroke="#a8b0bc" stroke-width="1" stroke-dasharray="1 2"/><path d="M1646,199.5 H1651" stroke="#a8b0bc" stroke-width="1" stroke-dasharray="1 2"/><rect x="1637" y="198.5" width="9" height="2" fill="#d8d8d8"/><rect x="1640.5" y="195" width="2" height="9" fill="#d8d8d8"/><path d="M1651,192 H1657 L1659,194 H1667 V206 H1651 Z" fill="#f8e4a8"/><path d="M1656,199 L1658,197 H1663 V202 L1661,204 H1656 Z" fill="#5ab0e8"/><path d="M1646,219.5 H1651" stroke="#a8b0bc" stroke-width="1" stroke-dasharray="1 2"/><rect x="1637" y="218.5" width="9" height="2" fill="#d8d8d8"/><rect x="1640.5" y="215" width="2" height="9" fill="#d8d8d8"/><rect x="1652" y="211" width="5" height="3" fill="#6ab8ec"/><rect x="1658" y="215" width="5" height="3" fill="#6ab8ec"/><rect x="1662" y="220" width="5" height="3" fill="#6ab8ec"/><rect x="1656" y="224" width="5" height="3" fill="#6ab8ec"/><path d="M1654,216 H1653 V226 H1655 M1660,219 V221 H1661" stroke="#e0e0e0" fill="none" stroke-width="1"/><path d="M1646,239.5 H1651" stroke="#a8b0bc" stroke-width="1" stroke-dasharray="1 2"/><rect x="1637" y="238.5" width="9" height="2" fill="#f0f0f0"/><path d="M1651,231 H1657 L1659,233 H1664 V236 H1655 L1652,243 H1651 Z" fill="#f8e4a8"/><path d="M1654,236 H1667 L1664,243 H1651 Z" fill="#f8e4a8"/><path d="M1655,243 V248 M1665,243 V248 M1655,245.5 H1665" stroke="#e0e0e0" stroke-width="1"/><path d="M1659,259.5 H1667" stroke="#a8b0bc" stroke-width="1" stroke-dasharray="1 2"/><path d="M1668,250 V255 M1682,250 V255 M1668,252.5 H1682" stroke="#e8e8e8" stroke-width="1"/><path d="M1667,259 L1675,255 L1683,259 L1675,263 Z" fill="#f4f4f4"/><path d="M1667,259 L1675,263 V267 L1667,263 Z" fill="#cfcfcf"/><path d="M1683,259 L1675,263 V267 L1683,263 Z" fill="#b8b8b8"/><path d="M1659,279.5 H1667" stroke="#a8b0bc" stroke-width="1" stroke-dasharray="1 2"/><path d="M1668,270 V275 M1682,270 V275 M1668,272.5 H1682" stroke="#e8e8e8" stroke-width="1"/><path d="M1667,279 L1675,275 L1683,279 L1675,283 Z" fill="#f4f4f4"/><path d="M1667,279 L1675,283 V287 L1667,283 Z" fill="#cfcfcf"/><path d="M1683,279 L1675,283 V287 L1683,283 Z" fill="#b8b8b8"/><path d="M1659,299.5 H1667" stroke="#a8b0bc" stroke-width="1" stroke-dasharray="1 2"/><path d="M1668,290 V295 M1682,290 V295 M1668,292.5 H1682" stroke="#e8e8e8" stroke-width="1"/><path d="M1667,299 L1675,295 L1683,299 L1675,303 Z" fill="#f4f4f4"/><path d="M1667,299 L1675,303 V307 L1667,303 Z" fill="#cfcfcf"/><path d="M1683,299 L1675,303 V307 L1683,303 Z" fill="#b8b8b8"/><path d="M1659,319.5 H1667" stroke="#a8b0bc" stroke-width="1" stroke-dasharray="1 2"/><path d="M1668,310 V315 M1682,310 V315 M1668,312.5 H1682" stroke="#e8e8e8" stroke-width="1"/><path d="M1667,319 L1675,315 L1683,319 L1675,323 Z" fill="#f4f4f4"/><path d="M1667,319 L1675,323 V327 L1667,323 Z" fill="#cfcfcf"/><path d="M1683,319 L1675,323 V327 L1683,323 Z" fill="#b8b8b8"/><path d="M1646,339.5 H1651" stroke="#a8b0bc" stroke-width="1" stroke-dasharray="1 2"/><rect x="1637" y="338.5" width="9" height="2" fill="#d8d8d8"/><rect x="1640.5" y="335" width="2" height="9" fill="#d8d8d8"/><path d="M1651,332 H1657 L1659,334 H1667 V346 H1651 Z" fill="#f8e4a8"/><path d="M1646,359.5 H1651" stroke="#a8b0bc" stroke-width="1" stroke-dasharray="1 2"/><rect x="1652.5" y="352.5" width="13" height="12" fill="none" stroke="#e8e8e8" stroke-width="1" stroke-dasharray="2.5 1.5"/><rect x="1651.5" y="351.5" width="2" height="2" fill="#f0f0f0"/><rect x="1664.5" y="351.5" width="2" height="2" fill="#f0f0f0"/><rect x="1651.5" y="363.5" width="2" height="2" fill="#f0f0f0"/><circle cx="1659" cy="361" r="2.1" fill="#a0a0a0"/><circle cx="1665" cy="357.5" r="2.1" fill="#a0a0a0"/><circle cx="1665" cy="364.5" r="2.1" fill="#a0a0a0"/><path d="M1659,361 L1665,357.5 M1659,361 L1665,364.5" stroke="#a0a0a0" stroke-width="1.3"/><path d="M1646,379.5 H1651" stroke="#a8b0bc" stroke-width="1" stroke-dasharray="1 2"/><rect x="1637" y="378.5" width="9" height="2" fill="#d8d8d8"/><rect x="1640.5" y="375" width="2" height="9" fill="#d8d8d8"/><path d="M1651,383 H1661 L1664,380 V384 L1661,386 H1651 Z" fill="#e8e8e8"/><path d="M1651,373 L1654,370 H1664 V380 L1661,383 H1651 Z" fill="#8ccaf4"/><path d="M1661,373 L1664,370 V380 L1661,383 Z" fill="#5ab0e8"/><path d="M1665.5,384 V372" stroke="#f4f4f4" stroke-width="1"/><path d="M1663.8,373.5 L1665.5,370 L1667.2,373.5 Z" fill="#f4f4f4"/><path d="M1646,399.5 H1651" stroke="#a8b0bc" stroke-width="1" stroke-dasharray="1 2"/><path d="M1651,395 Q1654,391 1659,391 V404 L1655,407 H1651 Z" fill="#e0e0e0"/><path d="M1659,391 Q1666,391 1667,399 L1663,402 Q1662,397 1659,395 Z" fill="#8ccaf4"/><path d="M1663,402 L1667,399 V404 L1663,407 Z" fill="#c0c0c0"/><path d="M1646,419.5 H1651" stroke="#a8b0bc" stroke-width="1" stroke-dasharray="1 2"/><path d="M1651,415 L1655,411 H1667 V423 L1663,427 H1651 Z" fill="#d8d8d8"/><rect x="1652" y="416" width="10" height="10" fill="#3b4453"/><path d="M1653,417 H1656 V422 H1661 V425 H1653 Z" fill="#6ab8ec"/><path d="M1646,439.5 H1651" stroke="#a8b0bc" stroke-width="1" stroke-dasharray="1 2"/><rect x="1637" y="438.5" width="9" height="2" fill="#d8d8d8"/><rect x="1640.5" y="435" width="2" height="9" fill="#d8d8d8"/><path d="M1651,443 H1661 L1664,440 V444 L1661,446 H1651 Z" fill="#e8e8e8"/><path d="M1651,433 L1654,430 H1664 V440 L1661,443 H1651 Z" fill="#8ccaf4"/><path d="M1661,433 L1664,430 V440 L1661,443 Z" fill="#5ab0e8"/><path d="M1665.5,444 V432" stroke="#f4f4f4" stroke-width="1"/><path d="M1663.8,433.5 L1665.5,430 L1667.2,433.5 Z" fill="#f4f4f4"/><path d="M1646,459.5 H1651" stroke="#a8b0bc" stroke-width="1" stroke-dasharray="1 2"/><rect x="1637" y="458.5" width="9" height="2" fill="#d8d8d8"/><rect x="1640.5" y="455" width="2" height="9" fill="#d8d8d8"/><path d="M1651,463 H1661 L1664,460 V464 L1661,466 H1651 Z" fill="#e8e8e8"/><path d="M1651,453 L1654,450 H1664 V460 L1661,463 H1651 Z" fill="#8ccaf4"/><path d="M1661,453 L1664,450 V460 L1661,463 Z" fill="#5ab0e8"/><path d="M1665.5,464 V452" stroke="#f4f4f4" stroke-width="1"/><path d="M1663.8,453.5 L1665.5,450 L1667.2,453.5 Z" fill="#f4f4f4"/><path d="M1646,479.5 H1651" stroke="#a8b0bc" stroke-width="1" stroke-dasharray="1 2"/><rect x="1637" y="478.5" width="9" height="2" fill="#d8d8d8"/><rect x="1640.5" y="475" width="2" height="9" fill="#d8d8d8"/><path d="M1651,483 H1661 L1664,480 V484 L1661,486 H1651 Z" fill="#e8e8e8"/><path d="M1651,473 L1654,470 H1664 V480 L1661,483 H1651 Z" fill="#8ccaf4"/><path d="M1661,473 L1664,470 V480 L1661,483 Z" fill="#5ab0e8"/><path d="M1665.5,484 V472" stroke="#f4f4f4" stroke-width="1"/><path d="M1663.8,473.5 L1665.5,470 L1667.2,473.5 Z" fill="#f4f4f4"/><path d="M1646,499.5 H1651" stroke="#a8b0bc" stroke-width="1" stroke-dasharray="1 2"/><rect x="1637" y="498.5" width="9" height="2" fill="#d8d8d8"/><rect x="1640.5" y="495" width="2" height="9" fill="#d8d8d8"/><path d="M1651,503 H1661 L1664,500 V504 L1661,506 H1651 Z" fill="#e8e8e8"/><path d="M1651,493 L1654,490 H1664 V500 L1661,503 H1651 Z" fill="#8ccaf4"/><path d="M1661,493 L1664,490 V500 L1661,503 Z" fill="#5ab0e8"/><path d="M1665.5,504 V492" stroke="#f4f4f4" stroke-width="1"/><path d="M1663.8,493.5 L1665.5,490 L1667.2,493.5 Z" fill="#f4f4f4"/><path d="M1646,519.5 H1651" stroke="#a8b0bc" stroke-width="1" stroke-dasharray="1 2"/><rect x="1637" y="518.5" width="9" height="2" fill="#d8d8d8"/><rect x="1640.5" y="515" width="2" height="9" fill="#d8d8d8"/><path d="M1651,523 H1661 L1664,520 V524 L1661,526 H1651 Z" fill="#e8e8e8"/><path d="M1651,513 L1654,510 H1664 V520 L1661,523 H1651 Z" fill="#8ccaf4"/><path d="M1661,513 L1664,510 V520 L1661,523 Z" fill="#5ab0e8"/><path d="M1665.5,524 V512" stroke="#f4f4f4" stroke-width="1"/><path d="M1663.8,513.5 L1665.5,510 L1667.2,513.5 Z" fill="#f4f4f4"/><path d="M1646,539.5 H1651" stroke="#a8b0bc" stroke-width="1" stroke-dasharray="1 2"/><rect x="1637" y="538.5" width="9" height="2" fill="#d8d8d8"/><rect x="1640.5" y="535" width="2" height="9" fill="#d8d8d8"/><path d="M1651,543 H1661 L1664,540 V544 L1661,546 H1651 Z" fill="#e8e8e8"/><path d="M1651,533 L1654,530 H1664 V540 L1661,543 H1651 Z" fill="#8ccaf4"/><path d="M1661,533 L1664,530 V540 L1661,543 Z" fill="#5ab0e8"/><path d="M1665.5,544 V532" stroke="#f4f4f4" stroke-width="1"/><path d="M1663.8,533.5 L1665.5,530 L1667.2,533.5 Z" fill="#f4f4f4"/><path d="M1646,559.5 H1651" stroke="#a8b0bc" stroke-width="1" stroke-dasharray="1 2"/><rect x="1637" y="558.5" width="9" height="2" fill="#d8d8d8"/><rect x="1640.5" y="555" width="2" height="9" fill="#d8d8d8"/><path d="M1651,563 H1661 L1664,560 V564 L1661,566 H1651 Z" fill="#e8e8e8"/><path d="M1651,553 L1654,550 H1664 V560 L1661,563 H1651 Z" fill="#8ccaf4"/><path d="M1661,553 L1664,550 V560 L1661,563 Z" fill="#5ab0e8"/><path d="M1665.5,564 V552" stroke="#f4f4f4" stroke-width="1"/><path d="M1663.8,553.5 L1665.5,550 L1667.2,553.5 Z" fill="#f4f4f4"/><path d="M1646,579.5 H1651" stroke="#a8b0bc" stroke-width="1" stroke-dasharray="1 2"/><rect x="1637" y="578.5" width="9" height="2" fill="#d8d8d8"/><rect x="1640.5" y="575" width="2" height="9" fill="#d8d8d8"/><path d="M1651,583 H1661 L1664,580 V584 L1661,586 H1651 Z" fill="#e8e8e8"/><path d="M1651,573 L1654,570 H1664 V580 L1661,583 H1651 Z" fill="#8ccaf4"/><path d="M1661,573 L1664,570 V580 L1661,583 Z" fill="#5ab0e8"/><path d="M1665.5,584 V572" stroke="#f4f4f4" stroke-width="1"/><path d="M1663.8,573.5 L1665.5,570 L1667.2,573.5 Z" fill="#f4f4f4"/><path d="M1646,599.5 H1651" stroke="#a8b0bc" stroke-width="1" stroke-dasharray="1 2"/><rect x="1637" y="598.5" width="9" height="2" fill="#d8d8d8"/><rect x="1640.5" y="595" width="2" height="9" fill="#d8d8d8"/><path d="M1651,603 H1661 L1664,600 V604 L1661,606 H1651 Z" fill="#e8e8e8"/><path d="M1651,593 L1654,590 H1664 V600 L1661,603 H1651 Z" fill="#8ccaf4"/><path d="M1661,593 L1664,590 V600 L1661,603 Z" fill="#5ab0e8"/><path d="M1665.5,604 V592" stroke="#f4f4f4" stroke-width="1"/><path d="M1663.8,593.5 L1665.5,590 L1667.2,593.5 Z" fill="#f4f4f4"/><path d="M1646,619.5 H1651" stroke="#a8b0bc" stroke-width="1" stroke-dasharray="1 2"/><rect x="1637" y="618.5" width="9" height="2" fill="#d8d8d8"/><rect x="1640.5" y="615" width="2" height="9" fill="#d8d8d8"/><path d="M1651,624.5 H1660.5 M1661,611 V625" stroke="#5ab8f0" stroke-width="1" fill="none"/><rect x="1660" y="624" width="2" height="2" fill="#5ab8f0"/><path d="M1663,624 L1667,620" stroke="#c8c8c8" stroke-width="1.2"/><path d="M1646,639.5 H1651" stroke="#a8b0bc" stroke-width="1" stroke-dasharray="1 2"/><rect x="1637" y="638.5" width="9" height="2" fill="#d8d8d8"/><rect x="1640.5" y="635" width="2" height="9" fill="#d8d8d8"/><path d="M1658,631 V646 H1651 Z" fill="#e0e0e0"/><path d="M1660,631 V646 H1667 Z" fill="#8ccaf4"/><path d="M1646,659.5 H1651" stroke="#a8b0bc" stroke-width="1" stroke-dasharray="1 2"/><rect x="1637" y="658.5" width="9" height="2" fill="#d8d8d8"/><rect x="1640.5" y="655" width="2" height="9" fill="#d8d8d8"/><path d="M1651,663 H1661 L1664,660 V664 L1661,666 H1651 Z" fill="#e8e8e8"/><path d="M1651,653 L1654,650 H1664 V660 L1661,663 H1651 Z" fill="#8ccaf4"/><path d="M1661,653 L1664,650 V660 L1661,663 Z" fill="#5ab0e8"/><path d="M1665.5,664 V652" stroke="#f4f4f4" stroke-width="1"/><path d="M1663.8,653.5 L1665.5,650 L1667.2,653.5 Z" fill="#f4f4f4"/><path d="M1646,679.5 H1651" stroke="#a8b0bc" stroke-width="1" stroke-dasharray="1 2"/><rect x="1637" y="678.5" width="9" height="2" fill="#d8d8d8"/><rect x="1640.5" y="675" width="2" height="9" fill="#d8d8d8"/><path d="M1651,684.5 H1660.5 M1661,671 V685" stroke="#e8e8e8" stroke-width="1" fill="none"/><rect x="1660" y="684" width="2" height="2" fill="#e8e8e8"/><path d="M1663,684 L1667,680" stroke="#c8c8c8" stroke-width="1.2"/><path d="M1646,699.5 H1651" stroke="#a8b0bc" stroke-width="1" stroke-dasharray="1 2"/><rect x="1652.5" y="692.5" width="13" height="12" fill="none" stroke="#e8e8e8" stroke-width="1" stroke-dasharray="2.5 1.5"/><rect x="1651.5" y="691.5" width="2" height="2" fill="#f0f0f0"/><rect x="1664.5" y="691.5" width="2" height="2" fill="#f0f0f0"/><rect x="1651.5" y="703.5" width="2" height="2" fill="#f0f0f0"/><path d="M1652,694 L1657,692 L1656,696 Z" fill="#f0f0f0"/><path d="M1654.5,694 V699" stroke="#f0f0f0" stroke-width="1"/><rect x="1664.5" y="703.5" width="2" height="2" fill="#f0f0f0"/><path d="M1646,719.5 H1651" stroke="#a8b0bc" stroke-width="1" stroke-dasharray="1 2"/><rect x="1637" y="718.5" width="9" height="2" fill="#d8d8d8"/><rect x="1640.5" y="715" width="2" height="9" fill="#d8d8d8"/><path d="M1651,724.5 H1660.5 M1661,711 V725" stroke="#e8e8e8" stroke-width="1" fill="none"/><rect x="1660" y="724" width="2" height="2" fill="#e8e8e8"/><path d="M1663,724 L1667,720" stroke="#c8c8c8" stroke-width="1.2"/><path d="M1646,739.5 H1651" stroke="#a8b0bc" stroke-width="1" stroke-dasharray="1 2"/><rect x="1637" y="738.5" width="9" height="2" fill="#d8d8d8"/><rect x="1640.5" y="735" width="2" height="9" fill="#d8d8d8"/><path d="M1652,737 Q1659.5,733 1667,737" fill="none" stroke="#e8e8e8" stroke-width="1.2"/><path d="M1651,740 Q1659.5,736 1668,740 V744 Q1664,742.5 1659.5,747 Q1655,742.5 1651,744 Z" fill="#8ccaf4"/><path d="M1664,742.5 Q1666,742 1668,744 V746 Q1665,745 1663,747 Z" fill="#d8d8d8"/><path d="M1646,759.5 H1651" stroke="#a8b0bc" stroke-width="1" stroke-dasharray="1 2"/><rect x="1637" y="758.5" width="9" height="2" fill="#d8d8d8"/><rect x="1640.5" y="755" width="2" height="9" fill="#d8d8d8"/><path d="M1651,763 H1661 L1664,760 V764 L1661,766 H1651 Z" fill="#e8e8e8"/><path d="M1651,753 L1654,750 H1664 V760 L1661,763 H1651 Z" fill="#8ccaf4"/><path d="M1661,753 L1664,750 V760 L1661,763 Z" fill="#5ab0e8"/><path d="M1665.5,764 V752" stroke="#f4f4f4" stroke-width="1"/><path d="M1663.8,753.5 L1665.5,750 L1667.2,753.5 Z" fill="#f4f4f4"/><path d="M1646,779.5 H1651" stroke="#a8b0bc" stroke-width="1" stroke-dasharray="1 2"/><rect x="1637" y="778.5" width="9" height="2" fill="#d8d8d8"/><rect x="1640.5" y="775" width="2" height="9" fill="#d8d8d8"/><circle cx="1654.5" cy="774.5" r="2.1" fill="#d0d0d0"/><circle cx="1660.6" cy="772.9" r="2.1" fill="#8ccaf4"/><circle cx="1665.1" cy="777.4" r="2.1" fill="#8ccaf4"/><circle cx="1663.5" cy="783.5" r="2.1" fill="#8ccaf4"/><circle cx="1657.4" cy="785.1" r="2.1" fill="#8ccaf4"/><circle cx="1652.9" cy="780.6" r="2.1" fill="#8ccaf4"/><path d="M1646,799.5 H1651" stroke="#a8b0bc" stroke-width="1" stroke-dasharray="1 2"/><rect x="1637" y="798.5" width="9" height="2" fill="#d8d8d8"/><rect x="1640.5" y="795" width="2" height="9" fill="#d8d8d8"/><path d="M1658,791 V806 H1651 Z" fill="#e0e0e0"/><path d="M1660,791 V806 H1667 Z" fill="#8ccaf4"/><path d="M1646,819.5 H1651" stroke="#a8b0bc" stroke-width="1" stroke-dasharray="1 2"/><rect x="1637" y="818.5" width="9" height="2" fill="#d8d8d8"/><rect x="1640.5" y="815" width="2" height="9" fill="#d8d8d8"/><path d="M1658,811 V826 H1651 Z" fill="#e0e0e0"/><path d="M1660,811 V826 H1667 Z" fill="#8ccaf4"/><path d="M1646,839.5 H1651" stroke="#a8b0bc" stroke-width="1" stroke-dasharray="1 2"/><rect x="1652.5" y="832.5" width="13" height="12" fill="none" stroke="#e8e8e8" stroke-width="1" stroke-dasharray="2.5 1.5"/><rect x="1651.5" y="831.5" width="2" height="2" fill="#f0f0f0"/><rect x="1664.5" y="831.5" width="2" height="2" fill="#f0f0f0"/><rect x="1651.5" y="843.5" width="2" height="2" fill="#f0f0f0"/><circle cx="1659" cy="841" r="2.1" fill="#a0a0a0"/><circle cx="1665" cy="837.5" r="2.1" fill="#a0a0a0"/><circle cx="1665" cy="844.5" r="2.1" fill="#a0a0a0"/><path d="M1659,841 L1665,837.5 M1659,841 L1665,844.5" stroke="#a0a0a0" stroke-width="1.3"/><path d="M1646,859.5 H1651" stroke="#a8b0bc" stroke-width="1" stroke-dasharray="1 2"/><rect x="1637" y="858.5" width="9" height="2" fill="#d8d8d8"/><rect x="1640.5" y="855" width="2" height="9" fill="#d8d8d8"/><path d="M1651,863 H1661 L1664,860 V864 L1661,866 H1651 Z" fill="#e8e8e8"/><path d="M1651,853 L1654,850 H1664 V860 L1661,863 H1651 Z" fill="#8ccaf4"/><path d="M1661,853 L1664,850 V860 L1661,863 Z" fill="#5ab0e8"/><path d="M1665.5,864 V852" stroke="#f4f4f4" stroke-width="1"/><path d="M1663.8,853.5 L1665.5,850 L1667.2,853.5 Z" fill="#f4f4f4"/><path d="M1646,879.5 H1651" stroke="#a8b0bc" stroke-width="1" stroke-dasharray="1 2"/><rect x="1637" y="878.5" width="9" height="2" fill="#d8d8d8"/><rect x="1640.5" y="875" width="2" height="9" fill="#d8d8d8"/><path d="M1651,884.5 H1660.5 M1661,871 V885" stroke="#e8e8e8" stroke-width="1" fill="none"/><rect x="1660" y="884" width="2" height="2" fill="#e8e8e8"/><path d="M1663,884 L1667,880" stroke="#c8c8c8" stroke-width="1.2"/><path d="M1646,899.5 H1651" stroke="#a8b0bc" stroke-width="1" stroke-dasharray="1 2"/><rect x="1637" y="898.5" width="9" height="2" fill="#d8d8d8"/><rect x="1640.5" y="895" width="2" height="9" fill="#d8d8d8"/><path d="M1658,891 V906 H1651 Z" fill="#e0e0e0"/><path d="M1660,891 V906 H1667 Z" fill="#8ccaf4"/><path d="M1646,919.5 H1651" stroke="#a8b0bc" stroke-width="1" stroke-dasharray="1 2"/><rect x="1637" y="918.5" width="9" height="2" fill="#d8d8d8"/><rect x="1640.5" y="915" width="2" height="9" fill="#d8d8d8"/><path d="M1658,911 V926 H1651 Z" fill="#e0e0e0"/><path d="M1660,911 V926 H1667 Z" fill="#8ccaf4"/><path d="M1646,939.5 H1651" stroke="#a8b0bc" stroke-width="1" stroke-dasharray="1 2"/><rect x="1637" y="938.5" width="9" height="2" fill="#d8d8d8"/><rect x="1640.5" y="935" width="2" height="9" fill="#d8d8d8"/><path d="M1651,943 H1661 L1664,940 V944 L1661,946 H1651 Z" fill="#e8e8e8"/><path d="M1651,933 L1654,930 H1664 V940 L1661,943 H1651 Z" fill="#8ccaf4"/><path d="M1661,933 L1664,930 V940 L1661,943 Z" fill="#5ab0e8"/><path d="M1665.5,944 V932" stroke="#f4f4f4" stroke-width="1"/><path d="M1663.8,933.5 L1665.5,930 L1667.2,933.5 Z" fill="#f4f4f4"/><path d="M1646,959.5 H1651" stroke="#a8b0bc" stroke-width="1" stroke-dasharray="1 2"/><rect x="1637" y="958.5" width="9" height="2" fill="#d8d8d8"/><rect x="1640.5" y="955" width="2" height="9" fill="#d8d8d8"/><path d="M1658,951 V966 H1651 Z" fill="#e0e0e0"/><path d="M1660,951 V966 H1667 Z" fill="#8ccaf4"/><path d="M1646,979.5 H1651" stroke="#a8b0bc" stroke-width="1" stroke-dasharray="1 2"/><rect x="1637" y="978.5" width="9" height="2" fill="#d8d8d8"/><rect x="1640.5" y="975" width="2" height="9" fill="#d8d8d8"/><path d="M1658,971 V986 H1651 Z" fill="#e0e0e0"/><path d="M1660,971 V986 H1667 Z" fill="#8ccaf4"/><path d="M1646,999.5 H1651" stroke="#a8b0bc" stroke-width="1" stroke-dasharray="1 2"/><rect x="1637" y="998.5" width="9" height="2" fill="#d8d8d8"/><rect x="1640.5" y="995" width="2" height="9" fill="#d8d8d8"/><path d="M1658,991 V1006 H1651 Z" fill="#e0e0e0"/><path d="M1660,991 V1006 H1667 Z" fill="#8ccaf4"/><path d="M1646,1019.5 H1651" stroke="#a8b0bc" stroke-width="1" stroke-dasharray="1 2"/><rect x="1637" y="1018.5" width="9" height="2" fill="#d8d8d8"/><rect x="1640.5" y="1015" width="2" height="9" fill="#d8d8d8"/><path d="M1651,1023 H1661 L1664,1020 V1024 L1661,1026 H1651 Z" fill="#e8e8e8"/><path d="M1651,1013 L1654,1010 H1664 V1020 L1661,1023 H1651 Z" fill="#8ccaf4"/><path d="M1661,1013 L1664,1010 V1020 L1661,1023 Z" fill="#5ab0e8"/><path d="M1665.5,1024 V1012" stroke="#f4f4f4" stroke-width="1"/><path d="M1663.8,1013.5 L1665.5,1010 L1667.2,1013.5 Z" fill="#f4f4f4"/><path d="M1646,1039.5 H1651" stroke="#a8b0bc" stroke-width="1" stroke-dasharray="1 2"/><rect x="1637" y="1038.5" width="9" height="2" fill="#d8d8d8"/><rect x="1640.5" y="1035" width="2" height="9" fill="#d8d8d8"/><path d="M1651,1043 H1661 L1664,1040 V1044 L1661,1046 H1651 Z" fill="#e8e8e8"/><path d="M1651,1033 L1654,1030 H1664 V1040 L1661,1043 H1651 Z" fill="#8ccaf4"/><path d="M1661,1033 L1664,1030 V1040 L1661,1043 Z" fill="#5ab0e8"/><path d="M1665.5,1044 V1032" stroke="#f4f4f4" stroke-width="1"/><path d="M1663.8,1033.5 L1665.5,1030 L1667.2,1033.5 Z" fill="#f4f4f4"/><path d="M1646,1059.5 H1651" stroke="#a8b0bc" stroke-width="1" stroke-dasharray="1 2"/><rect x="1637" y="1058.5" width="9" height="2" fill="#d8d8d8"/><rect x="1640.5" y="1055" width="2" height="9" fill="#d8d8d8"/><path d="M1651,1063 H1661 L1664,1060 V1064 L1661,1066 H1651 Z" fill="#e8e8e8"/><path d="M1651,1053 L1654,1050 H1664 V1060 L1661,1063 H1651 Z" fill="#8ccaf4"/><path d="M1661,1053 L1664,1050 V1060 L1661,1063 Z" fill="#5ab0e8"/><path d="M1665.5,1064 V1052" stroke="#f4f4f4" stroke-width="1"/><path d="M1663.8,1053.5 L1665.5,1050 L1667.2,1053.5 Z" fill="#f4f4f4"/></g></svg><div class="t" style="left:1652.43px;top:176.28px;font-size:10px;color:#eeeeee;transform:scaleX(1.0208);transform-origin:0 0;">BLOWER - NICOTRA RDH 630 K</div><div class="t" style="left:1669.02px;top:196.03px;font-size:10px;color:#eeeeee;transform:scaleX(1.0650);transform-origin:0 0;">Solid Bodies(1)</div><div class="t" style="left:1669.50px;top:216.03px;font-size:10px;color:#eeeeee;transform:scaleX(1.0650);transform-origin:0 0;">View: Master</div><div class="t" style="left:1669.50px;top:236.03px;font-size:10px;color:#eeeeee;transform:scaleX(1.0650);transform-origin:0 0;">Annotations</div><div class="t" style="left:1684.15px;top:256.03px;font-size:10px;color:#eeeeee;transform:scaleX(1.0650);transform-origin:0 0;">Linear Dimension 1</div><div class="t" style="left:1684.15px;top:276.04px;font-size:10px;color:#eeeeee;transform:scaleX(1.0650);transform-origin:0 0;">Linear Dimension 2</div><div class="t" style="left:1684.15px;top:296.04px;font-size:10px;color:#eeeeee;transform:scaleX(1.0650);transform-origin:0 0;">Linear Dimension 3</div><div class="t" style="left:1684.15px;top:316.04px;font-size:10px;color:#eeeeee;transform:scaleX(1.0650);transform-origin:0 0;">Linear Dimension 4</div><div class="t" style="left:1669.02px;top:336.04px;font-size:10px;color:#eeeeee;transform:scaleX(1.0650);transform-origin:0 0;">Origin</div><div class="t" style="left:1669.02px;top:356.04px;font-size:10px;color:#eeeeee;transform:scaleX(1.0650);transform-origin:0 0;">Sketch1</div><div class="t" style="left:1668.65px;top:376.04px;font-size:10px;color:#eeeeee;transform:scaleX(1.0650);transform-origin:0 0;">Extrusion1</div><div class="t" style="left:1668.65px;top:396.04px;font-size:10px;color:#eeeeee;transform:scaleX(1.0650);transform-origin:0 0;">Fillet1</div><div class="t" style="left:1669.02px;top:416.04px;font-size:10px;color:#eeeeee;transform:scaleX(1.0650);transform-origin:0 0;">Shell1</div><div class="t" style="left:1668.65px;top:436.04px;font-size:10px;color:#eeeeee;transform:scaleX(1.0650);transform-origin:0 0;">Extrusion2</div><div class="t" style="left:1668.65px;top:456.04px;font-size:10px;color:#eeeeee;transform:scaleX(1.0650);transform-origin:0 0;">Extrusion3</div><div class="t" style="left:1668.65px;top:476.04px;font-size:10px;color:#eeeeee;transform:scaleX(1.0650);transform-origin:0 0;">Extrusion4</div><div class="t" style="left:1668.65px;top:496.04px;font-size:10px;color:#eeeeee;transform:scaleX(1.0650);transform-origin:0 0;">Extrusion5</div><div class="t" style="left:1668.65px;top:516.03px;font-size:10px;color:#eeeeee;transform:scaleX(1.0650);transform-origin:0 0;">Extrusion6</div><div class="t" style="left:1668.65px;top:536.03px;font-size:10px;color:#eeeeee;transform:scaleX(1.0650);transform-origin:0 0;">Extrusion7</div><div class="t" style="left:1668.65px;top:556.03px;font-size:10px;color:#eeeeee;transform:scaleX(1.0650);transform-origin:0 0;">Extrusion8</div><div class="t" style="left:1668.65px;top:576.03px;font-size:10px;color:#eeeeee;transform:scaleX(1.0650);transform-origin:0 0;">Extrusion9</div><div class="t" style="left:1668.65px;top:596.03px;font-size:10px;color:#eeeeee;transform:scaleX(1.0650);transform-origin:0 0;">Extrusion10</div><div class="t" style="left:1669.13px;top:616.03px;font-size:10px;color:#eeeeee;transform:scaleX(1.0650);transform-origin:0 0;">3D Sketch1</div><div class="t" style="left:1668.65px;top:636.03px;font-size:10px;color:#eeeeee;transform:scaleX(1.0650);transform-origin:0 0;">Mirror1</div><div class="t" style="left:1668.65px;top:656.03px;font-size:10px;color:#eeeeee;transform:scaleX(1.0650);transform-origin:0 0;">Extrusion11</div><div class="t" style="left:1669.13px;top:676.03px;font-size:10px;color:#eeeeee;transform:scaleX(1.0650);transform-origin:0 0;">3D Sketch2</div><div class="t" style="left:1669.02px;top:696.03px;font-size:10px;color:#eeeeee;transform:scaleX(1.0650);transform-origin:0 0;">Sketch8</div><div class="t" style="left:1669.13px;top:716.03px;font-size:10px;color:#eeeeee;transform:scaleX(1.0650);transform-origin:0 0;">3D Sketch3</div><div class="t" style="left:1668.65px;top:736.03px;font-size:10px;color:#eeeeee;transform:scaleX(1.0650);transform-origin:0 0;">Revolution1</div><div class="t" style="left:1668.65px;top:756.03px;font-size:10px;color:#eeeeee;transform:scaleX(1.0650);transform-origin:0 0;">Extrusion12</div><div class="t" style="left:1668.97px;top:776.03px;font-size:10px;color:#eeeeee;transform:scaleX(1.0650);transform-origin:0 0;">Circular Pattern1</div><div class="t" style="left:1668.65px;top:796.03px;font-size:10px;color:#eeeeee;transform:scaleX(1.0650);transform-origin:0 0;">Mirror2</div><div class="t" style="left:1668.65px;top:816.03px;font-size:10px;color:#eeeeee;transform:scaleX(1.0650);transform-origin:0 0;">Mirror3</div><div class="t" style="left:1669.02px;top:836.03px;font-size:10px;color:#eeeeee;transform:scaleX(1.0650);transform-origin:0 0;">Sketch12</div><div class="t" style="left:1668.65px;top:856.03px;font-size:10px;color:#eeeeee;transform:scaleX(1.0650);transform-origin:0 0;">Extrusion13</div><div class="t" style="left:1669.13px;top:876.03px;font-size:10px;color:#eeeeee;transform:scaleX(1.0650);transform-origin:0 0;">3D Sketch4</div><div class="t" style="left:1668.65px;top:896.03px;font-size:10px;color:#eeeeee;transform:scaleX(1.0650);transform-origin:0 0;">Mirror4</div><div class="t" style="left:1668.65px;top:916.03px;font-size:10px;color:#eeeeee;transform:scaleX(1.0650);transform-origin:0 0;">Mirror5</div><div class="t" style="left:1668.65px;top:936.03px;font-size:10px;color:#eeeeee;transform:scaleX(1.0650);transform-origin:0 0;">Extrusion14</div><div class="t" style="left:1668.65px;top:956.03px;font-size:10px;color:#eeeeee;transform:scaleX(1.0650);transform-origin:0 0;">Mirror6</div><div class="t" style="left:1668.65px;top:976.03px;font-size:10px;color:#eeeeee;transform:scaleX(1.0650);transform-origin:0 0;">Mirror7</div><div class="t" style="left:1668.65px;top:996.03px;font-size:10px;color:#eeeeee;transform:scaleX(1.0650);transform-origin:0 0;">Mirror8</div><div class="t" style="left:1668.65px;top:1016.03px;font-size:10px;color:#eeeeee;transform:scaleX(1.0650);transform-origin:0 0;">Extrusion15</div><div class="t" style="left:1668.65px;top:1036.04px;font-size:10px;color:#eeeeee;transform:scaleX(1.0650);transform-origin:0 0;">Extrusion16</div>
</body></html>
